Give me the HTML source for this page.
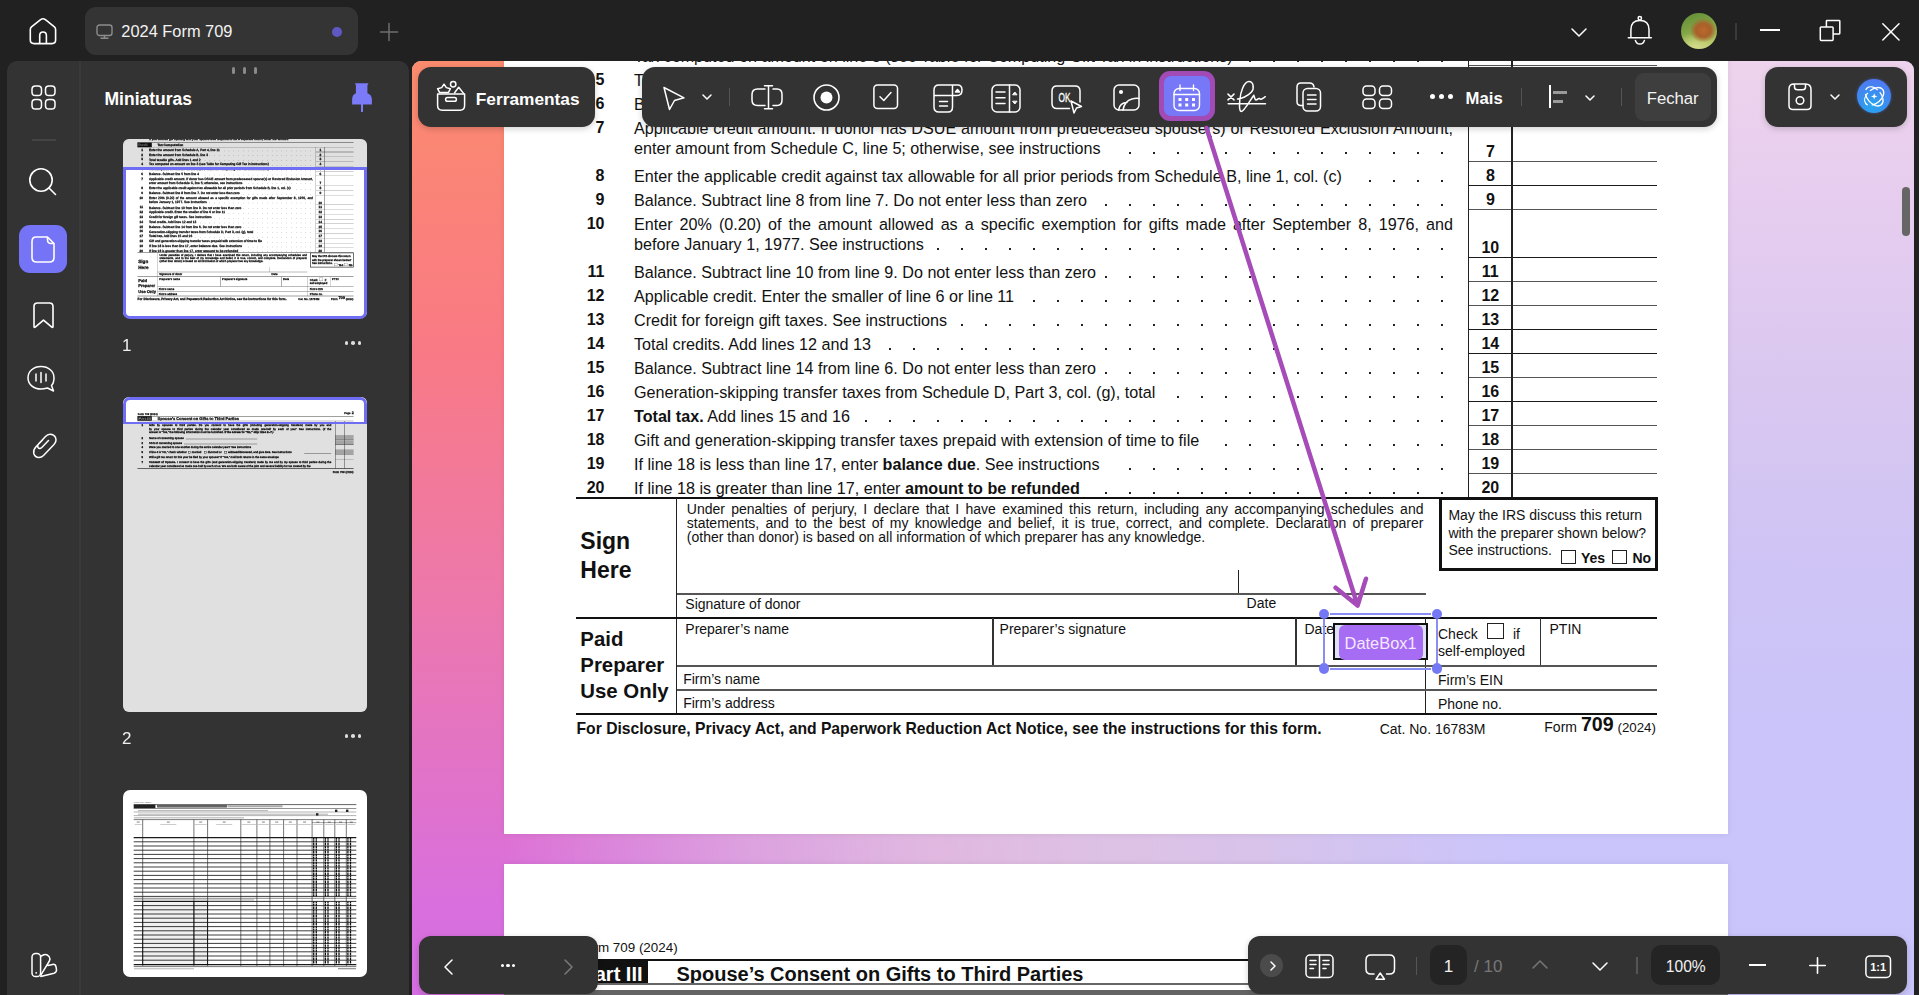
<!DOCTYPE html><html><head><meta charset="utf-8"><title>2024 Form 709</title><style>
html,body{margin:0;padding:0}
body{width:1919px;height:995px;overflow:hidden;position:relative;background:#212121;font-family:"Liberation Sans",sans-serif;color:#111}
.t{position:absolute;white-space:nowrap;line-height:1}
.r{position:absolute}
.ic{position:absolute;overflow:visible}
b{font-weight:bold}
.th .t{-webkit-text-stroke:1.3px #111}
</style></head><body><svg class="ic" style="left:20.0px;top:10.0px;width:46.0px;height:45.0px;stroke-width:1.6" viewBox="0 0 46 45" fill="none" stroke="#fff" stroke-width="1.6" stroke-linecap="round" stroke-linejoin="round"><path d="M10.3 19.5 Q10.3 17.8 11.8 16.6 L20.6 9.6 Q23 7.8 25.4 9.6 L34.1 16.6 Q35.6 17.8 35.6 19.5 V30 Q35.6 33.6 32 33.6 H14 Q10.3 33.6 10.3 30 Z M19.7 33.6 V25.5 Q19.7 22 23 22 Q26.4 22 26.4 25.5 V33.6"/></svg><div class="r" style="left:85.3px;top:7px;width:272.3px;height:47.6px;border-radius:11px;background:#343434"></div><svg class="ic" style="left:95.5px;top:24.0px;width:17.0px;height:15.5px;stroke:#8c8c8c;stroke-width:1.4" viewBox="0 0 17 15.5" fill="none" stroke="#fff" stroke-width="1.6" stroke-linecap="round" stroke-linejoin="round"><rect x="1" y="1" width="15" height="10.5" rx="2.5"/><path d="M8.5 11.5 V14 M5 14.2 H12"/></svg><div class="t" style="left:121.3px;top:23.3px;font-size:16.40px;color:#f2f2f2;">2024 Form 709</div><div class="r" style="left:332.3px;top:26.5px;width:10px;height:10px;border-radius:50%;background:#5f58c2"></div><svg class="ic" style="left:379.6px;top:23.0px;width:18.0px;height:18.0px;stroke:#6e6e6e;stroke-width:1.5" viewBox="0 0 18 18" fill="none" stroke="#fff" stroke-width="1.6" stroke-linecap="round" stroke-linejoin="round"><path d="M9 0.5 V17.5 M0.5 9 H17.5"/></svg><svg class="ic" style="left:1571.0px;top:27.5px;width:16.0px;height:9.0px;stroke-width:1.5" viewBox="0 0 16 9" fill="none" stroke="#fff" stroke-width="1.6" stroke-linecap="round" stroke-linejoin="round"><path d="M1 1 L8 8 L15 1"/></svg><svg class="ic" style="left:1620.0px;top:10.0px;width:40.0px;height:40.0px;stroke-width:1.5" viewBox="0 0 40 40" fill="none" stroke="#fff" stroke-width="1.6" stroke-linecap="round" stroke-linejoin="round"><path d="M10.9 27.7 V19.5 Q10.9 10.4 19.9 10.4 Q29 10.4 29 19.5 V27.7 M8.3 27.8 H31.3 M15.4 30.4 Q16.3 34.1 19.9 34.1 Q23.5 34.1 24.4 30.4"/><circle cx="19.8" cy="8.3" r="1.7"/></svg><div class="r" style="left:1680.8px;top:12.7px;width:36.5px;height:36.5px;border-radius:50%;background:radial-gradient(ellipse 38% 34% at 62% 48%, #b8692e 0%, #a9602a 55%, rgba(160,100,50,0) 100%),radial-gradient(ellipse 60% 40% at 40% 95%, #d4dc8a 0%, rgba(200,210,120,0) 100%),linear-gradient(160deg,#5f8a35 0%,#7ea345 40%,#a9bf5c 75%,#c6d27c 100%)"></div><div class="r" style="left:1735.2px;top:22.7px;width:1.5px;height:16.9px;background:#3a3a3a"></div><div class="r" style="left:1759.8px;top:29.4px;width:20.4px;height:1.3px;background:#fff"></div><svg class="ic" style="left:1819.0px;top:20.4px;width:22.0px;height:22.0px;stroke-width:1.5;stroke-linecap:butt" viewBox="0 0 22 22" fill="none" stroke="#fff" stroke-width="1.6" stroke-linecap="round" stroke-linejoin="round"><rect x="1.3" y="7" width="12.8" height="13.4" rx="0.8"/><path d="M7.4 7 V1.2 Q7.4 0.6 8 0.6 H20.2 Q20.8 0.6 20.8 1.2 V13.3 Q20.8 13.9 20.2 13.9 H14.1"/></svg><svg class="ic" style="left:1882.0px;top:23.0px;width:18.0px;height:18.0px;stroke-width:1.5" viewBox="0 0 18 18" fill="none" stroke="#fff" stroke-width="1.6" stroke-linecap="round" stroke-linejoin="round"><path d="M0.8 0.8 L17 17 M17 0.8 L0.8 17"/></svg><div class="r" style="left:7px;top:61px;width:401.5px;height:940px;border-radius:10px 10px 0 0;background:#333333"></div><div class="r" style="left:78.5px;top:61.0px;width:2.0px;height:934.0px;background:#3a3a3a"></div><svg class="ic" style="left:30.8px;top:84.6px;width:25.0px;height:25.0px;stroke-width:1.5" viewBox="0 0 25 25" fill="none" stroke="#fff" stroke-width="1.6" stroke-linecap="round" stroke-linejoin="round"><rect x="1" y="1" width="9.5" height="9.5" rx="3.3"/><rect x="14.5" y="1" width="9.5" height="9.5" rx="3.3"/><rect x="1" y="14.5" width="9.5" height="9.5" rx="3.3"/><rect x="14.5" y="14.5" width="9.5" height="9.5" rx="3.3"/></svg><div class="r" style="left:32.0px;top:139.2px;width:24.0px;height:1.5px;background:#444"></div><svg class="ic" style="left:29.0px;top:168.0px;width:28.0px;height:28.0px;stroke-width:1.6" viewBox="0 0 28 28" fill="none" stroke="#fff" stroke-width="1.6" stroke-linecap="round" stroke-linejoin="round"><circle cx="12" cy="12" r="11.2"/><path d="M20 20 L26.5 26.5"/></svg><div class="r" style="left:19px;top:225px;width:48px;height:47.5px;border-radius:11px;background:#7573f6"></div><svg class="ic" style="left:31.0px;top:235.8px;width:24.0px;height:27.0px;stroke-width:1.6" viewBox="0 0 24 27" fill="none" stroke="#fff" stroke-width="1.6" stroke-linecap="round" stroke-linejoin="round"><path d="M5 1 H16.5 L23 7.5 V21.5 Q23 26 18.5 26 H5.5 Q1 26 1 21.5 V5.5 Q1 1 5 1 Z M16.5 1 V3.5 Q16.5 7.5 20 7.5 H23"/></svg><svg class="ic" style="left:32.6px;top:301.8px;width:21.0px;height:27.0px;stroke-width:1.6" viewBox="0 0 21 27" fill="none" stroke="#fff" stroke-width="1.6" stroke-linecap="round" stroke-linejoin="round"><path d="M1 4.5 Q1 1 4.5 1 H16.5 Q20 1 20 4.5 V24.5 Q20 26 18.8 25.2 L10.5 18.2 L2.2 25.2 Q1 26 1 24.5 Z"/></svg><svg class="ic" style="left:27.0px;top:365.0px;width:28.0px;height:28.0px;stroke-width:1.5" viewBox="0 0 28 28" fill="none" stroke="#fff" stroke-width="1.6" stroke-linecap="round" stroke-linejoin="round"><path d="M14 1.5 C6.5 1.5 1 6.3 1 12.8 C1 19.3 6.5 24 14 24 C16.5 24 18.5 23.5 20.5 23 L26.5 26 L24.5 20.5 C26.5 18.5 27 15.5 27 12.8 C27 6.3 21.5 1.5 14 1.5 Z M9 9 V16 M14 7.5 V17.5 M19 9 V16"/></svg><svg class="ic" style="left:31.7px;top:433.0px;width:25.0px;height:26.0px;stroke-width:1.5" viewBox="0 0 25 26" fill="none" stroke="#fff" stroke-width="1.6" stroke-linecap="round" stroke-linejoin="round"><path d="M10.5 7 L4 13.8 Q1 17 1.8 20.5 Q3 24.5 7 24.5 Q9.5 24.5 11.5 22.5 L22 11.5 Q25 8 23.5 4.5 Q21.8 1 18 1.2 Q15.5 1.3 13.5 3.5 L6.5 11 Q5 12.8 6 14.5 Q7.5 16.5 9.8 14.5 L16.5 7.5"/></svg><svg class="ic" style="left:20.0px;top:940.0px;width:50.0px;height:50.0px;stroke-width:1.5" viewBox="0 0 50 50" fill="none" stroke="#fff" stroke-width="1.6" stroke-linecap="round" stroke-linejoin="round"><rect x="12" y="13.4" width="8.6" height="23.2" rx="3.6"/><path d="M20.8 16.2 L23.8 14.8 Q26.8 13.8 29 16.4 Q30.6 18.6 29.4 21 L20.8 35.2 M28 25.4 L32.6 24.4 Q35.6 24 36.1 27.2 L36.5 29.6 Q36.7 32.4 34 33.2 L20.8 36.4"/><circle cx="16.2" cy="32.8" r="0.9" fill="#fff" stroke="none"/></svg><div class="t" style="left:232.0px;top:65.3px;font-size:10.00px;"></div><div class="r" style="left:231.5px;top:66.8px;width:3.3px;height:7px;border-radius:2px;background:#8a8a8a"></div><div class="r" style="left:242.8px;top:66.8px;width:3.3px;height:7px;border-radius:2px;background:#8a8a8a"></div><div class="r" style="left:254.2px;top:66.8px;width:3.3px;height:7px;border-radius:2px;background:#8a8a8a"></div><div class="t" style="left:104.5px;top:90.5px;font-size:17.50px;font-weight:bold;color:#fff;">Miniaturas</div><svg class="ic" style="left:345px;top:78px;width:35px;height:38px" viewBox="0 0 35 38"><path d="M9.9 5.3 H23.5 L22.4 7.2 V15.2 Q26.9 16.8 26.9 21.5 V26.4 H7.1 V21.5 Q7.1 16.8 10.9 15.2 V7.2 Z M16 26 H18 V34 H16 Z" fill="#7b7af8"/></svg><div class="r th" style="left:122.8px;top:138.8px;width:244.0px;height:179.5px;overflow:hidden;background:#fff;border-radius:6px;"><div style="position:absolute;left:0;top:0;width:1224px;height:1584px;transform-origin:0 0;will-change:transform;text-rendering:geometricPrecision;transform:scale(0.2) translate(0px,-679px)"><div style="position:absolute;left:-504px;top:750px"><div class="t" style="left:634.0px;top:-79.5px;font-size:16.00px;">If you elected gift splitting and your spouse was required to file a separate return, enter the amount</div><div class="r" style="left:575.5px;top:-54.8px;width:1081.0px;height:1.5px;background:#111"></div><div class="r" style="left:575.5px;top:-53.5px;width:72px;height:23px;background:#111"></div><div class="t" style="left:581.5px;top:-49.5px;font-size:16.00px;font-weight:bold;color:#fff;">Part II</div><div class="t" style="left:676.0px;top:-49.5px;font-size:16.00px;font-weight:bold;">Tax Computation</div><div class="r" style="left:575.5px;top:-30.8px;width:1081.0px;height:1.2px;background:#333"></div><div class="t" style="left:595.6px;top:-23.9px;font-size:16.00px;font-weight:bold;">1</div><div class="t" style="left:634.0px;top:-24.1px;font-size:16.15px;">Enter the amount from Schedule A, Part 4, line 11</div><div class="r" style="left:1441.0px;top:-12.4px;width:2px;height:2px;background:#222"></div><div class="r" style="left:1417.0px;top:-12.4px;width:2px;height:2px;background:#222"></div><div class="r" style="left:1393.0px;top:-12.4px;width:2px;height:2px;background:#222"></div><div class="r" style="left:1369.0px;top:-12.4px;width:2px;height:2px;background:#222"></div><div class="r" style="left:1345.0px;top:-12.4px;width:2px;height:2px;background:#222"></div><div class="r" style="left:1321.0px;top:-12.4px;width:2px;height:2px;background:#222"></div><div class="r" style="left:1297.0px;top:-12.4px;width:2px;height:2px;background:#222"></div><div class="r" style="left:1273.0px;top:-12.4px;width:2px;height:2px;background:#222"></div><div class="r" style="left:1249.0px;top:-12.4px;width:2px;height:2px;background:#222"></div><div class="r" style="left:1225.0px;top:-12.4px;width:2px;height:2px;background:#222"></div><div class="r" style="left:1201.0px;top:-12.4px;width:2px;height:2px;background:#222"></div><div class="r" style="left:1177.0px;top:-12.4px;width:2px;height:2px;background:#222"></div><div class="r" style="left:1153.0px;top:-12.4px;width:2px;height:2px;background:#222"></div><div class="r" style="left:1129.0px;top:-12.4px;width:2px;height:2px;background:#222"></div><div class="r" style="left:1105.0px;top:-12.4px;width:2px;height:2px;background:#222"></div><div class="r" style="left:1081.0px;top:-12.4px;width:2px;height:2px;background:#222"></div><div class="r" style="left:1057.0px;top:-12.4px;width:2px;height:2px;background:#222"></div><div class="r" style="left:1033.0px;top:-12.4px;width:2px;height:2px;background:#222"></div><div class="r" style="left:1009.0px;top:-12.4px;width:2px;height:2px;background:#222"></div><div class="t" style="left:1485.9px;top:-23.9px;font-size:16.00px;font-weight:bold;">1</div><div class="r" style="left:1468.5px;top:-6.8px;width:188.0px;height:1.3px;background:#1a1a1a"></div><div class="t" style="left:595.6px;top:0.1px;font-size:16.00px;font-weight:bold;">2</div><div class="t" style="left:634.0px;top:-0.1px;font-size:16.15px;">Enter the amount from Schedule B, line 3</div><div class="r" style="left:1441.0px;top:11.6px;width:2px;height:2px;background:#222"></div><div class="r" style="left:1417.0px;top:11.6px;width:2px;height:2px;background:#222"></div><div class="r" style="left:1393.0px;top:11.6px;width:2px;height:2px;background:#222"></div><div class="r" style="left:1369.0px;top:11.6px;width:2px;height:2px;background:#222"></div><div class="r" style="left:1345.0px;top:11.6px;width:2px;height:2px;background:#222"></div><div class="r" style="left:1321.0px;top:11.6px;width:2px;height:2px;background:#222"></div><div class="r" style="left:1297.0px;top:11.6px;width:2px;height:2px;background:#222"></div><div class="r" style="left:1273.0px;top:11.6px;width:2px;height:2px;background:#222"></div><div class="r" style="left:1249.0px;top:11.6px;width:2px;height:2px;background:#222"></div><div class="r" style="left:1225.0px;top:11.6px;width:2px;height:2px;background:#222"></div><div class="r" style="left:1201.0px;top:11.6px;width:2px;height:2px;background:#222"></div><div class="r" style="left:1177.0px;top:11.6px;width:2px;height:2px;background:#222"></div><div class="r" style="left:1153.0px;top:11.6px;width:2px;height:2px;background:#222"></div><div class="r" style="left:1129.0px;top:11.6px;width:2px;height:2px;background:#222"></div><div class="r" style="left:1105.0px;top:11.6px;width:2px;height:2px;background:#222"></div><div class="r" style="left:1081.0px;top:11.6px;width:2px;height:2px;background:#222"></div><div class="r" style="left:1057.0px;top:11.6px;width:2px;height:2px;background:#222"></div><div class="r" style="left:1033.0px;top:11.6px;width:2px;height:2px;background:#222"></div><div class="r" style="left:1009.0px;top:11.6px;width:2px;height:2px;background:#222"></div><div class="r" style="left:985.0px;top:11.6px;width:2px;height:2px;background:#222"></div><div class="r" style="left:961.0px;top:11.6px;width:2px;height:2px;background:#222"></div><div class="r" style="left:937.0px;top:11.6px;width:2px;height:2px;background:#222"></div><div class="t" style="left:1485.9px;top:0.1px;font-size:16.00px;font-weight:bold;">2</div><div class="r" style="left:1468.5px;top:17.3px;width:188.0px;height:1.0px;background:#555"></div><div class="t" style="left:595.6px;top:24.1px;font-size:16.00px;font-weight:bold;">3</div><div class="t" style="left:634.0px;top:23.9px;font-size:16.15px;">Total taxable gifts. Add lines 1 and 2</div><div class="r" style="left:1441.0px;top:35.6px;width:2px;height:2px;background:#222"></div><div class="r" style="left:1417.0px;top:35.6px;width:2px;height:2px;background:#222"></div><div class="r" style="left:1393.0px;top:35.6px;width:2px;height:2px;background:#222"></div><div class="r" style="left:1369.0px;top:35.6px;width:2px;height:2px;background:#222"></div><div class="r" style="left:1345.0px;top:35.6px;width:2px;height:2px;background:#222"></div><div class="r" style="left:1321.0px;top:35.6px;width:2px;height:2px;background:#222"></div><div class="r" style="left:1297.0px;top:35.6px;width:2px;height:2px;background:#222"></div><div class="r" style="left:1273.0px;top:35.6px;width:2px;height:2px;background:#222"></div><div class="r" style="left:1249.0px;top:35.6px;width:2px;height:2px;background:#222"></div><div class="r" style="left:1225.0px;top:35.6px;width:2px;height:2px;background:#222"></div><div class="r" style="left:1201.0px;top:35.6px;width:2px;height:2px;background:#222"></div><div class="r" style="left:1177.0px;top:35.6px;width:2px;height:2px;background:#222"></div><div class="r" style="left:1153.0px;top:35.6px;width:2px;height:2px;background:#222"></div><div class="r" style="left:1129.0px;top:35.6px;width:2px;height:2px;background:#222"></div><div class="r" style="left:1105.0px;top:35.6px;width:2px;height:2px;background:#222"></div><div class="r" style="left:1081.0px;top:35.6px;width:2px;height:2px;background:#222"></div><div class="r" style="left:1057.0px;top:35.6px;width:2px;height:2px;background:#222"></div><div class="r" style="left:1033.0px;top:35.6px;width:2px;height:2px;background:#222"></div><div class="r" style="left:1009.0px;top:35.6px;width:2px;height:2px;background:#222"></div><div class="r" style="left:985.0px;top:35.6px;width:2px;height:2px;background:#222"></div><div class="r" style="left:961.0px;top:35.6px;width:2px;height:2px;background:#222"></div><div class="r" style="left:937.0px;top:35.6px;width:2px;height:2px;background:#222"></div><div class="r" style="left:913.0px;top:35.6px;width:2px;height:2px;background:#222"></div><div class="t" style="left:1485.9px;top:24.1px;font-size:16.00px;font-weight:bold;">3</div><div class="r" style="left:1468.5px;top:41.1px;width:188.0px;height:1.3px;background:#1a1a1a"></div><div class="t" style="left:595.6px;top:48.1px;font-size:16.00px;font-weight:bold;">4</div><div class="t" style="left:634.0px;top:47.9px;font-size:16.15px;">Tax computed on amount on line 3 (see Table for Computing Gift Tax in instructions)</div><div class="r" style="left:1441.0px;top:59.6px;width:2px;height:2px;background:#222"></div><div class="r" style="left:1417.0px;top:59.6px;width:2px;height:2px;background:#222"></div><div class="r" style="left:1393.0px;top:59.6px;width:2px;height:2px;background:#222"></div><div class="r" style="left:1369.0px;top:59.6px;width:2px;height:2px;background:#222"></div><div class="r" style="left:1345.0px;top:59.6px;width:2px;height:2px;background:#222"></div><div class="r" style="left:1321.0px;top:59.6px;width:2px;height:2px;background:#222"></div><div class="r" style="left:1297.0px;top:59.6px;width:2px;height:2px;background:#222"></div><div class="r" style="left:1273.0px;top:59.6px;width:2px;height:2px;background:#222"></div><div class="r" style="left:1249.0px;top:59.6px;width:2px;height:2px;background:#222"></div><div class="t" style="left:1485.9px;top:48.1px;font-size:16.00px;font-weight:bold;">4</div><div class="r" style="left:1468.5px;top:65.3px;width:188.0px;height:1.0px;background:#555"></div><div class="t" style="left:595.6px;top:72.1px;font-size:16.00px;font-weight:bold;">5</div><div class="t" style="left:634.0px;top:71.9px;font-size:16.15px;">Tax computed on amount on line 2 (see Table for Computing Gift Tax in instructions)</div><div class="r" style="left:1441.0px;top:83.6px;width:2px;height:2px;background:#222"></div><div class="r" style="left:1417.0px;top:83.6px;width:2px;height:2px;background:#222"></div><div class="r" style="left:1393.0px;top:83.6px;width:2px;height:2px;background:#222"></div><div class="r" style="left:1369.0px;top:83.6px;width:2px;height:2px;background:#222"></div><div class="r" style="left:1345.0px;top:83.6px;width:2px;height:2px;background:#222"></div><div class="r" style="left:1321.0px;top:83.6px;width:2px;height:2px;background:#222"></div><div class="r" style="left:1297.0px;top:83.6px;width:2px;height:2px;background:#222"></div><div class="r" style="left:1273.0px;top:83.6px;width:2px;height:2px;background:#222"></div><div class="r" style="left:1249.0px;top:83.6px;width:2px;height:2px;background:#222"></div><div class="t" style="left:1485.9px;top:72.1px;font-size:16.00px;font-weight:bold;">5</div><div class="r" style="left:1468.5px;top:89.1px;width:188.0px;height:1.3px;background:#1a1a1a"></div><div class="t" style="left:595.6px;top:96.1px;font-size:16.00px;font-weight:bold;">6</div><div class="t" style="left:634.0px;top:95.9px;font-size:16.15px;">Balance. Subtract line 5 from line 4</div><div class="r" style="left:1441.0px;top:107.6px;width:2px;height:2px;background:#222"></div><div class="r" style="left:1417.0px;top:107.6px;width:2px;height:2px;background:#222"></div><div class="r" style="left:1393.0px;top:107.6px;width:2px;height:2px;background:#222"></div><div class="r" style="left:1369.0px;top:107.6px;width:2px;height:2px;background:#222"></div><div class="r" style="left:1345.0px;top:107.6px;width:2px;height:2px;background:#222"></div><div class="r" style="left:1321.0px;top:107.6px;width:2px;height:2px;background:#222"></div><div class="r" style="left:1297.0px;top:107.6px;width:2px;height:2px;background:#222"></div><div class="r" style="left:1273.0px;top:107.6px;width:2px;height:2px;background:#222"></div><div class="r" style="left:1249.0px;top:107.6px;width:2px;height:2px;background:#222"></div><div class="r" style="left:1225.0px;top:107.6px;width:2px;height:2px;background:#222"></div><div class="r" style="left:1201.0px;top:107.6px;width:2px;height:2px;background:#222"></div><div class="r" style="left:1177.0px;top:107.6px;width:2px;height:2px;background:#222"></div><div class="r" style="left:1153.0px;top:107.6px;width:2px;height:2px;background:#222"></div><div class="r" style="left:1129.0px;top:107.6px;width:2px;height:2px;background:#222"></div><div class="r" style="left:1105.0px;top:107.6px;width:2px;height:2px;background:#222"></div><div class="r" style="left:1081.0px;top:107.6px;width:2px;height:2px;background:#222"></div><div class="r" style="left:1057.0px;top:107.6px;width:2px;height:2px;background:#222"></div><div class="r" style="left:1033.0px;top:107.6px;width:2px;height:2px;background:#222"></div><div class="r" style="left:1009.0px;top:107.6px;width:2px;height:2px;background:#222"></div><div class="r" style="left:985.0px;top:107.6px;width:2px;height:2px;background:#222"></div><div class="r" style="left:961.0px;top:107.6px;width:2px;height:2px;background:#222"></div><div class="r" style="left:937.0px;top:107.6px;width:2px;height:2px;background:#222"></div><div class="r" style="left:913.0px;top:107.6px;width:2px;height:2px;background:#222"></div><div class="t" style="left:1485.9px;top:96.1px;font-size:16.00px;font-weight:bold;">6</div><div class="r" style="left:1468.5px;top:113.3px;width:188.0px;height:1.0px;background:#555"></div><div class="t" style="left:595.6px;top:120.3px;font-size:16.00px;font-weight:bold;">7</div><div class="t" style="left:634.0px;top:120.1px;width:819.0px;font-size:16.15px;text-align:justify;text-align-last:justify;white-space:normal;">Applicable credit amount. If donor has DSUE amount from predeceased spouse(s) or Restored Exclusion Amount,</div><div class="t" style="left:634.0px;top:140.1px;font-size:16.15px;">enter amount from Schedule C, line 5; otherwise, see instructions</div><div class="r" style="left:1441.0px;top:151.8px;width:2px;height:2px;background:#222"></div><div class="r" style="left:1417.0px;top:151.8px;width:2px;height:2px;background:#222"></div><div class="r" style="left:1393.0px;top:151.8px;width:2px;height:2px;background:#222"></div><div class="r" style="left:1369.0px;top:151.8px;width:2px;height:2px;background:#222"></div><div class="r" style="left:1345.0px;top:151.8px;width:2px;height:2px;background:#222"></div><div class="r" style="left:1321.0px;top:151.8px;width:2px;height:2px;background:#222"></div><div class="r" style="left:1297.0px;top:151.8px;width:2px;height:2px;background:#222"></div><div class="r" style="left:1273.0px;top:151.8px;width:2px;height:2px;background:#222"></div><div class="r" style="left:1249.0px;top:151.8px;width:2px;height:2px;background:#222"></div><div class="r" style="left:1225.0px;top:151.8px;width:2px;height:2px;background:#222"></div><div class="r" style="left:1201.0px;top:151.8px;width:2px;height:2px;background:#222"></div><div class="r" style="left:1177.0px;top:151.8px;width:2px;height:2px;background:#222"></div><div class="r" style="left:1153.0px;top:151.8px;width:2px;height:2px;background:#222"></div><div class="r" style="left:1129.0px;top:151.8px;width:2px;height:2px;background:#222"></div><div class="t" style="left:1485.9px;top:144.1px;font-size:16.00px;font-weight:bold;">7</div><div class="r" style="left:1468.5px;top:161.3px;width:188.0px;height:1.0px;background:#555"></div><div class="t" style="left:595.6px;top:168.1px;font-size:16.00px;font-weight:bold;">8</div><div class="t" style="left:634.0px;top:167.9px;font-size:16.15px;">Enter the applicable credit against tax allowable for all prior periods from Schedule B, line 1, col. (c)</div><div class="r" style="left:1441.0px;top:179.6px;width:2px;height:2px;background:#222"></div><div class="r" style="left:1417.0px;top:179.6px;width:2px;height:2px;background:#222"></div><div class="r" style="left:1393.0px;top:179.6px;width:2px;height:2px;background:#222"></div><div class="r" style="left:1369.0px;top:179.6px;width:2px;height:2px;background:#222"></div><div class="t" style="left:1485.9px;top:168.1px;font-size:16.00px;font-weight:bold;">8</div><div class="r" style="left:1468.5px;top:185.2px;width:188.0px;height:1.3px;background:#1a1a1a"></div><div class="t" style="left:595.6px;top:192.1px;font-size:16.00px;font-weight:bold;">9</div><div class="t" style="left:634.0px;top:191.9px;font-size:16.15px;">Balance. Subtract line 8 from line 7. Do not enter less than zero</div><div class="r" style="left:1441.0px;top:203.6px;width:2px;height:2px;background:#222"></div><div class="r" style="left:1417.0px;top:203.6px;width:2px;height:2px;background:#222"></div><div class="r" style="left:1393.0px;top:203.6px;width:2px;height:2px;background:#222"></div><div class="r" style="left:1369.0px;top:203.6px;width:2px;height:2px;background:#222"></div><div class="r" style="left:1345.0px;top:203.6px;width:2px;height:2px;background:#222"></div><div class="r" style="left:1321.0px;top:203.6px;width:2px;height:2px;background:#222"></div><div class="r" style="left:1297.0px;top:203.6px;width:2px;height:2px;background:#222"></div><div class="r" style="left:1273.0px;top:203.6px;width:2px;height:2px;background:#222"></div><div class="r" style="left:1249.0px;top:203.6px;width:2px;height:2px;background:#222"></div><div class="r" style="left:1225.0px;top:203.6px;width:2px;height:2px;background:#222"></div><div class="r" style="left:1201.0px;top:203.6px;width:2px;height:2px;background:#222"></div><div class="r" style="left:1177.0px;top:203.6px;width:2px;height:2px;background:#222"></div><div class="r" style="left:1153.0px;top:203.6px;width:2px;height:2px;background:#222"></div><div class="r" style="left:1129.0px;top:203.6px;width:2px;height:2px;background:#222"></div><div class="r" style="left:1105.0px;top:203.6px;width:2px;height:2px;background:#222"></div><div class="t" style="left:1485.9px;top:192.1px;font-size:16.00px;font-weight:bold;">9</div><div class="r" style="left:1468.5px;top:209.3px;width:188.0px;height:1.0px;background:#555"></div><div class="t" style="left:586.7px;top:216.3px;font-size:16.00px;font-weight:bold;">10</div><div class="t" style="left:634.0px;top:216.1px;width:819.0px;font-size:16.15px;text-align:justify;text-align-last:justify;white-space:normal;">Enter 20% (0.20) of the amount allowed as a specific exemption for gifts made after September 8, 1976, and</div><div class="t" style="left:634.0px;top:236.1px;font-size:16.15px;">before January 1, 1977. See instructions</div><div class="r" style="left:1441.0px;top:247.8px;width:2px;height:2px;background:#222"></div><div class="r" style="left:1417.0px;top:247.8px;width:2px;height:2px;background:#222"></div><div class="r" style="left:1393.0px;top:247.8px;width:2px;height:2px;background:#222"></div><div class="r" style="left:1369.0px;top:247.8px;width:2px;height:2px;background:#222"></div><div class="r" style="left:1345.0px;top:247.8px;width:2px;height:2px;background:#222"></div><div class="r" style="left:1321.0px;top:247.8px;width:2px;height:2px;background:#222"></div><div class="r" style="left:1297.0px;top:247.8px;width:2px;height:2px;background:#222"></div><div class="r" style="left:1273.0px;top:247.8px;width:2px;height:2px;background:#222"></div><div class="r" style="left:1249.0px;top:247.8px;width:2px;height:2px;background:#222"></div><div class="r" style="left:1225.0px;top:247.8px;width:2px;height:2px;background:#222"></div><div class="r" style="left:1201.0px;top:247.8px;width:2px;height:2px;background:#222"></div><div class="r" style="left:1177.0px;top:247.8px;width:2px;height:2px;background:#222"></div><div class="r" style="left:1153.0px;top:247.8px;width:2px;height:2px;background:#222"></div><div class="r" style="left:1129.0px;top:247.8px;width:2px;height:2px;background:#222"></div><div class="r" style="left:1105.0px;top:247.8px;width:2px;height:2px;background:#222"></div><div class="r" style="left:1081.0px;top:247.8px;width:2px;height:2px;background:#222"></div><div class="r" style="left:1057.0px;top:247.8px;width:2px;height:2px;background:#222"></div><div class="r" style="left:1033.0px;top:247.8px;width:2px;height:2px;background:#222"></div><div class="r" style="left:1009.0px;top:247.8px;width:2px;height:2px;background:#222"></div><div class="r" style="left:985.0px;top:247.8px;width:2px;height:2px;background:#222"></div><div class="r" style="left:961.0px;top:247.8px;width:2px;height:2px;background:#222"></div><div class="r" style="left:937.0px;top:247.8px;width:2px;height:2px;background:#222"></div><div class="t" style="left:1481.4px;top:240.1px;font-size:16.00px;font-weight:bold;">10</div><div class="r" style="left:1468.5px;top:257.2px;width:188.0px;height:1.3px;background:#1a1a1a"></div><div class="t" style="left:587.6px;top:264.1px;font-size:16.00px;font-weight:bold;">11</div><div class="t" style="left:634.0px;top:263.9px;font-size:16.15px;">Balance. Subtract line 10 from line 9. Do not enter less than zero</div><div class="r" style="left:1441.0px;top:275.6px;width:2px;height:2px;background:#222"></div><div class="r" style="left:1417.0px;top:275.6px;width:2px;height:2px;background:#222"></div><div class="r" style="left:1393.0px;top:275.6px;width:2px;height:2px;background:#222"></div><div class="r" style="left:1369.0px;top:275.6px;width:2px;height:2px;background:#222"></div><div class="r" style="left:1345.0px;top:275.6px;width:2px;height:2px;background:#222"></div><div class="r" style="left:1321.0px;top:275.6px;width:2px;height:2px;background:#222"></div><div class="r" style="left:1297.0px;top:275.6px;width:2px;height:2px;background:#222"></div><div class="r" style="left:1273.0px;top:275.6px;width:2px;height:2px;background:#222"></div><div class="r" style="left:1249.0px;top:275.6px;width:2px;height:2px;background:#222"></div><div class="r" style="left:1225.0px;top:275.6px;width:2px;height:2px;background:#222"></div><div class="r" style="left:1201.0px;top:275.6px;width:2px;height:2px;background:#222"></div><div class="r" style="left:1177.0px;top:275.6px;width:2px;height:2px;background:#222"></div><div class="r" style="left:1153.0px;top:275.6px;width:2px;height:2px;background:#222"></div><div class="r" style="left:1129.0px;top:275.6px;width:2px;height:2px;background:#222"></div><div class="r" style="left:1105.0px;top:275.6px;width:2px;height:2px;background:#222"></div><div class="t" style="left:1481.8px;top:264.1px;font-size:16.00px;font-weight:bold;">11</div><div class="r" style="left:1468.5px;top:281.3px;width:188.0px;height:1.0px;background:#555"></div><div class="t" style="left:586.7px;top:288.1px;font-size:16.00px;font-weight:bold;">12</div><div class="t" style="left:634.0px;top:287.9px;font-size:16.15px;">Applicable credit. Enter the smaller of line 6 or line 11</div><div class="r" style="left:1441.0px;top:299.6px;width:2px;height:2px;background:#222"></div><div class="r" style="left:1417.0px;top:299.6px;width:2px;height:2px;background:#222"></div><div class="r" style="left:1393.0px;top:299.6px;width:2px;height:2px;background:#222"></div><div class="r" style="left:1369.0px;top:299.6px;width:2px;height:2px;background:#222"></div><div class="r" style="left:1345.0px;top:299.6px;width:2px;height:2px;background:#222"></div><div class="r" style="left:1321.0px;top:299.6px;width:2px;height:2px;background:#222"></div><div class="r" style="left:1297.0px;top:299.6px;width:2px;height:2px;background:#222"></div><div class="r" style="left:1273.0px;top:299.6px;width:2px;height:2px;background:#222"></div><div class="r" style="left:1249.0px;top:299.6px;width:2px;height:2px;background:#222"></div><div class="r" style="left:1225.0px;top:299.6px;width:2px;height:2px;background:#222"></div><div class="r" style="left:1201.0px;top:299.6px;width:2px;height:2px;background:#222"></div><div class="r" style="left:1177.0px;top:299.6px;width:2px;height:2px;background:#222"></div><div class="r" style="left:1153.0px;top:299.6px;width:2px;height:2px;background:#222"></div><div class="r" style="left:1129.0px;top:299.6px;width:2px;height:2px;background:#222"></div><div class="r" style="left:1105.0px;top:299.6px;width:2px;height:2px;background:#222"></div><div class="r" style="left:1081.0px;top:299.6px;width:2px;height:2px;background:#222"></div><div class="r" style="left:1057.0px;top:299.6px;width:2px;height:2px;background:#222"></div><div class="r" style="left:1033.0px;top:299.6px;width:2px;height:2px;background:#222"></div><div class="t" style="left:1481.4px;top:288.1px;font-size:16.00px;font-weight:bold;">12</div><div class="r" style="left:1468.5px;top:305.3px;width:188.0px;height:1.0px;background:#555"></div><div class="t" style="left:586.7px;top:312.1px;font-size:16.00px;font-weight:bold;">13</div><div class="t" style="left:634.0px;top:311.9px;font-size:16.15px;">Credit for foreign gift taxes. See instructions</div><div class="r" style="left:1441.0px;top:323.6px;width:2px;height:2px;background:#222"></div><div class="r" style="left:1417.0px;top:323.6px;width:2px;height:2px;background:#222"></div><div class="r" style="left:1393.0px;top:323.6px;width:2px;height:2px;background:#222"></div><div class="r" style="left:1369.0px;top:323.6px;width:2px;height:2px;background:#222"></div><div class="r" style="left:1345.0px;top:323.6px;width:2px;height:2px;background:#222"></div><div class="r" style="left:1321.0px;top:323.6px;width:2px;height:2px;background:#222"></div><div class="r" style="left:1297.0px;top:323.6px;width:2px;height:2px;background:#222"></div><div class="r" style="left:1273.0px;top:323.6px;width:2px;height:2px;background:#222"></div><div class="r" style="left:1249.0px;top:323.6px;width:2px;height:2px;background:#222"></div><div class="r" style="left:1225.0px;top:323.6px;width:2px;height:2px;background:#222"></div><div class="r" style="left:1201.0px;top:323.6px;width:2px;height:2px;background:#222"></div><div class="r" style="left:1177.0px;top:323.6px;width:2px;height:2px;background:#222"></div><div class="r" style="left:1153.0px;top:323.6px;width:2px;height:2px;background:#222"></div><div class="r" style="left:1129.0px;top:323.6px;width:2px;height:2px;background:#222"></div><div class="r" style="left:1105.0px;top:323.6px;width:2px;height:2px;background:#222"></div><div class="r" style="left:1081.0px;top:323.6px;width:2px;height:2px;background:#222"></div><div class="r" style="left:1057.0px;top:323.6px;width:2px;height:2px;background:#222"></div><div class="r" style="left:1033.0px;top:323.6px;width:2px;height:2px;background:#222"></div><div class="r" style="left:1009.0px;top:323.6px;width:2px;height:2px;background:#222"></div><div class="r" style="left:985.0px;top:323.6px;width:2px;height:2px;background:#222"></div><div class="r" style="left:961.0px;top:323.6px;width:2px;height:2px;background:#222"></div><div class="t" style="left:1481.4px;top:312.1px;font-size:16.00px;font-weight:bold;">13</div><div class="r" style="left:1468.5px;top:329.2px;width:188.0px;height:1.3px;background:#1a1a1a"></div><div class="t" style="left:586.7px;top:336.1px;font-size:16.00px;font-weight:bold;">14</div><div class="t" style="left:634.0px;top:335.9px;font-size:16.15px;">Total credits. Add lines 12 and 13</div><div class="r" style="left:1441.0px;top:347.6px;width:2px;height:2px;background:#222"></div><div class="r" style="left:1417.0px;top:347.6px;width:2px;height:2px;background:#222"></div><div class="r" style="left:1393.0px;top:347.6px;width:2px;height:2px;background:#222"></div><div class="r" style="left:1369.0px;top:347.6px;width:2px;height:2px;background:#222"></div><div class="r" style="left:1345.0px;top:347.6px;width:2px;height:2px;background:#222"></div><div class="r" style="left:1321.0px;top:347.6px;width:2px;height:2px;background:#222"></div><div class="r" style="left:1297.0px;top:347.6px;width:2px;height:2px;background:#222"></div><div class="r" style="left:1273.0px;top:347.6px;width:2px;height:2px;background:#222"></div><div class="r" style="left:1249.0px;top:347.6px;width:2px;height:2px;background:#222"></div><div class="r" style="left:1225.0px;top:347.6px;width:2px;height:2px;background:#222"></div><div class="r" style="left:1201.0px;top:347.6px;width:2px;height:2px;background:#222"></div><div class="r" style="left:1177.0px;top:347.6px;width:2px;height:2px;background:#222"></div><div class="r" style="left:1153.0px;top:347.6px;width:2px;height:2px;background:#222"></div><div class="r" style="left:1129.0px;top:347.6px;width:2px;height:2px;background:#222"></div><div class="r" style="left:1105.0px;top:347.6px;width:2px;height:2px;background:#222"></div><div class="r" style="left:1081.0px;top:347.6px;width:2px;height:2px;background:#222"></div><div class="r" style="left:1057.0px;top:347.6px;width:2px;height:2px;background:#222"></div><div class="r" style="left:1033.0px;top:347.6px;width:2px;height:2px;background:#222"></div><div class="r" style="left:1009.0px;top:347.6px;width:2px;height:2px;background:#222"></div><div class="r" style="left:985.0px;top:347.6px;width:2px;height:2px;background:#222"></div><div class="r" style="left:961.0px;top:347.6px;width:2px;height:2px;background:#222"></div><div class="r" style="left:937.0px;top:347.6px;width:2px;height:2px;background:#222"></div><div class="r" style="left:913.0px;top:347.6px;width:2px;height:2px;background:#222"></div><div class="r" style="left:889.0px;top:347.6px;width:2px;height:2px;background:#222"></div><div class="t" style="left:1481.4px;top:336.1px;font-size:16.00px;font-weight:bold;">14</div><div class="r" style="left:1468.5px;top:353.2px;width:188.0px;height:1.3px;background:#1a1a1a"></div><div class="t" style="left:586.7px;top:360.1px;font-size:16.00px;font-weight:bold;">15</div><div class="t" style="left:634.0px;top:359.9px;font-size:16.15px;">Balance. Subtract line 14 from line 6. Do not enter less than zero</div><div class="r" style="left:1441.0px;top:371.6px;width:2px;height:2px;background:#222"></div><div class="r" style="left:1417.0px;top:371.6px;width:2px;height:2px;background:#222"></div><div class="r" style="left:1393.0px;top:371.6px;width:2px;height:2px;background:#222"></div><div class="r" style="left:1369.0px;top:371.6px;width:2px;height:2px;background:#222"></div><div class="r" style="left:1345.0px;top:371.6px;width:2px;height:2px;background:#222"></div><div class="r" style="left:1321.0px;top:371.6px;width:2px;height:2px;background:#222"></div><div class="r" style="left:1297.0px;top:371.6px;width:2px;height:2px;background:#222"></div><div class="r" style="left:1273.0px;top:371.6px;width:2px;height:2px;background:#222"></div><div class="r" style="left:1249.0px;top:371.6px;width:2px;height:2px;background:#222"></div><div class="r" style="left:1225.0px;top:371.6px;width:2px;height:2px;background:#222"></div><div class="r" style="left:1201.0px;top:371.6px;width:2px;height:2px;background:#222"></div><div class="r" style="left:1177.0px;top:371.6px;width:2px;height:2px;background:#222"></div><div class="r" style="left:1153.0px;top:371.6px;width:2px;height:2px;background:#222"></div><div class="r" style="left:1129.0px;top:371.6px;width:2px;height:2px;background:#222"></div><div class="r" style="left:1105.0px;top:371.6px;width:2px;height:2px;background:#222"></div><div class="t" style="left:1481.4px;top:360.1px;font-size:16.00px;font-weight:bold;">15</div><div class="r" style="left:1468.5px;top:377.3px;width:188.0px;height:1.0px;background:#555"></div><div class="t" style="left:586.7px;top:384.1px;font-size:16.00px;font-weight:bold;">16</div><div class="t" style="left:634.0px;top:383.9px;font-size:16.15px;">Generation-skipping transfer taxes from Schedule D, Part 3, col. (g), total</div><div class="r" style="left:1441.0px;top:395.6px;width:2px;height:2px;background:#222"></div><div class="r" style="left:1417.0px;top:395.6px;width:2px;height:2px;background:#222"></div><div class="r" style="left:1393.0px;top:395.6px;width:2px;height:2px;background:#222"></div><div class="r" style="left:1369.0px;top:395.6px;width:2px;height:2px;background:#222"></div><div class="r" style="left:1345.0px;top:395.6px;width:2px;height:2px;background:#222"></div><div class="r" style="left:1321.0px;top:395.6px;width:2px;height:2px;background:#222"></div><div class="r" style="left:1297.0px;top:395.6px;width:2px;height:2px;background:#222"></div><div class="r" style="left:1273.0px;top:395.6px;width:2px;height:2px;background:#222"></div><div class="r" style="left:1249.0px;top:395.6px;width:2px;height:2px;background:#222"></div><div class="r" style="left:1225.0px;top:395.6px;width:2px;height:2px;background:#222"></div><div class="r" style="left:1201.0px;top:395.6px;width:2px;height:2px;background:#222"></div><div class="r" style="left:1177.0px;top:395.6px;width:2px;height:2px;background:#222"></div><div class="t" style="left:1481.4px;top:384.1px;font-size:16.00px;font-weight:bold;">16</div><div class="r" style="left:1468.5px;top:401.2px;width:188.0px;height:1.3px;background:#1a1a1a"></div><div class="t" style="left:586.7px;top:408.1px;font-size:16.00px;font-weight:bold;">17</div><div class="t" style="left:634.0px;top:407.9px;font-size:16.15px;"><b>Total tax.</b> Add lines 15 and 16</div><div class="r" style="left:1441.0px;top:419.6px;width:2px;height:2px;background:#222"></div><div class="r" style="left:1417.0px;top:419.6px;width:2px;height:2px;background:#222"></div><div class="r" style="left:1393.0px;top:419.6px;width:2px;height:2px;background:#222"></div><div class="r" style="left:1369.0px;top:419.6px;width:2px;height:2px;background:#222"></div><div class="r" style="left:1345.0px;top:419.6px;width:2px;height:2px;background:#222"></div><div class="r" style="left:1321.0px;top:419.6px;width:2px;height:2px;background:#222"></div><div class="r" style="left:1297.0px;top:419.6px;width:2px;height:2px;background:#222"></div><div class="r" style="left:1273.0px;top:419.6px;width:2px;height:2px;background:#222"></div><div class="r" style="left:1249.0px;top:419.6px;width:2px;height:2px;background:#222"></div><div class="r" style="left:1225.0px;top:419.6px;width:2px;height:2px;background:#222"></div><div class="r" style="left:1201.0px;top:419.6px;width:2px;height:2px;background:#222"></div><div class="r" style="left:1177.0px;top:419.6px;width:2px;height:2px;background:#222"></div><div class="r" style="left:1153.0px;top:419.6px;width:2px;height:2px;background:#222"></div><div class="r" style="left:1129.0px;top:419.6px;width:2px;height:2px;background:#222"></div><div class="r" style="left:1105.0px;top:419.6px;width:2px;height:2px;background:#222"></div><div class="r" style="left:1081.0px;top:419.6px;width:2px;height:2px;background:#222"></div><div class="r" style="left:1057.0px;top:419.6px;width:2px;height:2px;background:#222"></div><div class="r" style="left:1033.0px;top:419.6px;width:2px;height:2px;background:#222"></div><div class="r" style="left:1009.0px;top:419.6px;width:2px;height:2px;background:#222"></div><div class="r" style="left:985.0px;top:419.6px;width:2px;height:2px;background:#222"></div><div class="r" style="left:961.0px;top:419.6px;width:2px;height:2px;background:#222"></div><div class="r" style="left:937.0px;top:419.6px;width:2px;height:2px;background:#222"></div><div class="r" style="left:913.0px;top:419.6px;width:2px;height:2px;background:#222"></div><div class="r" style="left:889.0px;top:419.6px;width:2px;height:2px;background:#222"></div><div class="r" style="left:865.0px;top:419.6px;width:2px;height:2px;background:#222"></div><div class="t" style="left:1481.4px;top:408.1px;font-size:16.00px;font-weight:bold;">17</div><div class="r" style="left:1468.5px;top:425.3px;width:188.0px;height:1.0px;background:#555"></div><div class="t" style="left:586.7px;top:432.1px;font-size:16.00px;font-weight:bold;">18</div><div class="t" style="left:634.0px;top:431.9px;font-size:16.15px;">Gift and generation-skipping transfer taxes prepaid with extension of time to file</div><div class="r" style="left:1441.0px;top:443.6px;width:2px;height:2px;background:#222"></div><div class="r" style="left:1417.0px;top:443.6px;width:2px;height:2px;background:#222"></div><div class="r" style="left:1393.0px;top:443.6px;width:2px;height:2px;background:#222"></div><div class="r" style="left:1369.0px;top:443.6px;width:2px;height:2px;background:#222"></div><div class="r" style="left:1345.0px;top:443.6px;width:2px;height:2px;background:#222"></div><div class="r" style="left:1321.0px;top:443.6px;width:2px;height:2px;background:#222"></div><div class="r" style="left:1297.0px;top:443.6px;width:2px;height:2px;background:#222"></div><div class="r" style="left:1273.0px;top:443.6px;width:2px;height:2px;background:#222"></div><div class="r" style="left:1249.0px;top:443.6px;width:2px;height:2px;background:#222"></div><div class="r" style="left:1225.0px;top:443.6px;width:2px;height:2px;background:#222"></div><div class="t" style="left:1481.4px;top:432.1px;font-size:16.00px;font-weight:bold;">18</div><div class="r" style="left:1468.5px;top:449.3px;width:188.0px;height:1.0px;background:#555"></div><div class="t" style="left:586.7px;top:456.1px;font-size:16.00px;font-weight:bold;">19</div><div class="t" style="left:634.0px;top:455.9px;font-size:16.15px;">If line 18 is less than line 17, enter <b>balance due</b>. See instructions</div><div class="r" style="left:1441.0px;top:467.6px;width:2px;height:2px;background:#222"></div><div class="r" style="left:1417.0px;top:467.6px;width:2px;height:2px;background:#222"></div><div class="r" style="left:1393.0px;top:467.6px;width:2px;height:2px;background:#222"></div><div class="r" style="left:1369.0px;top:467.6px;width:2px;height:2px;background:#222"></div><div class="r" style="left:1345.0px;top:467.6px;width:2px;height:2px;background:#222"></div><div class="r" style="left:1321.0px;top:467.6px;width:2px;height:2px;background:#222"></div><div class="r" style="left:1297.0px;top:467.6px;width:2px;height:2px;background:#222"></div><div class="r" style="left:1273.0px;top:467.6px;width:2px;height:2px;background:#222"></div><div class="r" style="left:1249.0px;top:467.6px;width:2px;height:2px;background:#222"></div><div class="r" style="left:1225.0px;top:467.6px;width:2px;height:2px;background:#222"></div><div class="r" style="left:1201.0px;top:467.6px;width:2px;height:2px;background:#222"></div><div class="r" style="left:1177.0px;top:467.6px;width:2px;height:2px;background:#222"></div><div class="r" style="left:1153.0px;top:467.6px;width:2px;height:2px;background:#222"></div><div class="r" style="left:1129.0px;top:467.6px;width:2px;height:2px;background:#222"></div><div class="t" style="left:1481.4px;top:456.1px;font-size:16.00px;font-weight:bold;">19</div><div class="r" style="left:1468.5px;top:473.3px;width:188.0px;height:1.0px;background:#555"></div><div class="t" style="left:586.7px;top:480.1px;font-size:16.00px;font-weight:bold;">20</div><div class="t" style="left:634.0px;top:479.9px;font-size:16.15px;">If line 18 is greater than line 17, enter <b>amount to be refunded</b></div><div class="r" style="left:1441.0px;top:491.6px;width:2px;height:2px;background:#222"></div><div class="r" style="left:1417.0px;top:491.6px;width:2px;height:2px;background:#222"></div><div class="r" style="left:1393.0px;top:491.6px;width:2px;height:2px;background:#222"></div><div class="r" style="left:1369.0px;top:491.6px;width:2px;height:2px;background:#222"></div><div class="r" style="left:1345.0px;top:491.6px;width:2px;height:2px;background:#222"></div><div class="r" style="left:1321.0px;top:491.6px;width:2px;height:2px;background:#222"></div><div class="r" style="left:1297.0px;top:491.6px;width:2px;height:2px;background:#222"></div><div class="r" style="left:1273.0px;top:491.6px;width:2px;height:2px;background:#222"></div><div class="r" style="left:1249.0px;top:491.6px;width:2px;height:2px;background:#222"></div><div class="r" style="left:1225.0px;top:491.6px;width:2px;height:2px;background:#222"></div><div class="r" style="left:1201.0px;top:491.6px;width:2px;height:2px;background:#222"></div><div class="r" style="left:1177.0px;top:491.6px;width:2px;height:2px;background:#222"></div><div class="r" style="left:1153.0px;top:491.6px;width:2px;height:2px;background:#222"></div><div class="r" style="left:1129.0px;top:491.6px;width:2px;height:2px;background:#222"></div><div class="r" style="left:1105.0px;top:491.6px;width:2px;height:2px;background:#222"></div><div class="t" style="left:1481.4px;top:480.1px;font-size:16.00px;font-weight:bold;">20</div><div class="r" style="left:1467.8px;top:-30.2px;width:1.3px;height:528.2px;background:#222"></div><div class="r" style="left:1511.3px;top:-30.2px;width:1.3px;height:528.2px;background:#222"></div><div class="r" style="left:575.5px;top:497.1px;width:1081.0px;height:1.8px;background:#111"></div><div class="r" style="left:675.9px;top:498.0px;width:1.3px;height:216.0px;background:#222"></div><div class="t" style="left:580.3px;top:530.1px;font-size:23.00px;font-weight:bold;">Sign</div><div class="t" style="left:580.3px;top:559.2px;font-size:23.00px;font-weight:bold;">Here</div><div class="t" style="left:686.8px;top:502.4px;width:736.7px;font-size:14.00px;text-align:justify;text-align-last:justify;white-space:normal;">Under penalties of perjury, I declare that I have examined this return, including any accompanying schedules and</div><div class="t" style="left:686.8px;top:516.4px;width:736.7px;font-size:14.00px;text-align:justify;text-align-last:justify;white-space:normal;">statements, and to the best of my knowledge and belief, it is true, correct, and complete. Declaration of preparer</div><div class="t" style="left:686.8px;top:530.4px;font-size:14.00px;">(other than donor) is based on all information of which preparer has any knowledge.</div><div class="r" style="left:1237.6px;top:569.7px;width:1.3px;height:24.3px;background:#222"></div><div class="r" style="left:677.0px;top:593.4px;width:749.0px;height:1.3px;background:#555"></div><div class="t" style="left:685.3px;top:596.8px;font-size:14.00px;">Signature of donor</div><div class="t" style="left:1246.6px;top:596.2px;font-size:14.00px;">Date</div><div class="r" style="left:1438.5px;top:496.5px;width:219.0px;height:74.5px;border:3px solid #111;background:#fff;box-sizing:border-box;"></div><div class="t" style="left:1448.4px;top:507.9px;font-size:14.00px;">May the IRS discuss this return</div><div class="t" style="left:1448.4px;top:525.7px;font-size:14.00px;">with the preparer shown below?</div><div class="t" style="left:1448.4px;top:543.2px;font-size:14.00px;">See instructions.</div><div class="r" style="left:1560.8px;top:549.6px;width:15.0px;height:14.5px;border:1.3px solid #222;background:transparent;box-sizing:border-box;"></div><div class="t" style="left:1580.9px;top:551.1px;font-size:14.00px;font-weight:bold;">Yes</div><div class="r" style="left:1612.3px;top:549.6px;width:15.0px;height:14.5px;border:1.3px solid #222;background:transparent;box-sizing:border-box;"></div><div class="t" style="left:1632.4px;top:551.1px;font-size:14.00px;font-weight:bold;">No</div><div class="r" style="left:575.5px;top:617.1px;width:1081.0px;height:1.8px;background:#111"></div><div class="t" style="left:580.3px;top:629.0px;font-size:20.40px;font-weight:bold;">Paid</div><div class="t" style="left:580.3px;top:655.4px;font-size:20.40px;font-weight:bold;">Preparer</div><div class="t" style="left:580.3px;top:681.2px;font-size:20.40px;font-weight:bold;">Use Only</div><div class="r" style="left:992.4px;top:618.0px;width:1.3px;height:48.0px;background:#333"></div><div class="r" style="left:1295.3px;top:618.0px;width:1.3px;height:48.0px;background:#333"></div><div class="r" style="left:1424.8px;top:618.0px;width:1.3px;height:96.0px;background:#222"></div><div class="r" style="left:1539.8px;top:618.0px;width:1.3px;height:48.0px;background:#333"></div><div class="t" style="left:685.3px;top:621.6px;font-size:14.00px;">Preparer’s name</div><div class="t" style="left:999.6px;top:621.6px;font-size:14.00px;">Preparer’s signature</div><div class="t" style="left:1304.5px;top:621.6px;font-size:14.00px;">Date</div><div class="t" style="left:1438.0px;top:626.9px;font-size:14.00px;">Check</div><div class="r" style="left:1486.8px;top:623.3px;width:17.0px;height:16.2px;border:1.3px solid #222;background:transparent;box-sizing:border-box;"></div><div class="t" style="left:1513.0px;top:626.9px;font-size:14.00px;">if</div><div class="t" style="left:1438.0px;top:643.9px;font-size:14.00px;">self-employed</div><div class="t" style="left:1549.5px;top:622.1px;font-size:14.00px;">PTIN</div><div class="r" style="left:677.0px;top:665.4px;width:979.5px;height:1.3px;background:#555"></div><div class="t" style="left:683.2px;top:672.2px;font-size:14.00px;">Firm’s name</div><div class="t" style="left:1438.0px;top:672.6px;font-size:14.00px;">Firm’s EIN</div><div class="r" style="left:677.0px;top:689.4px;width:979.5px;height:1.3px;background:#555"></div><div class="t" style="left:683.2px;top:695.9px;font-size:14.00px;">Firm’s address</div><div class="t" style="left:1438.0px;top:696.9px;font-size:14.00px;">Phone no.</div><div class="r" style="left:575.5px;top:713.1px;width:1081.0px;height:1.8px;background:#111"></div><div class="t" style="left:576.5px;top:720.9px;font-size:15.70px;font-weight:bold;">For Disclosure, Privacy Act, and Paperwork Reduction Act Notice, see the instructions for this form.</div><div class="t" style="left:1379.7px;top:722.2px;font-size:14.00px;">Cat. No. 16783M</div><div class="t" style="left:1544.3px;top:720.2px;font-size:14.00px;">Form</div><div class="t" style="left:1580.9px;top:715.1px;font-size:19.60px;font-weight:bold;">709</div><div class="t" style="left:1617.5px;top:720.8px;font-size:13.30px;">(2024)</div></div></div></div><div class="r" style="left:122.8px;top:138.8px;width:244px;height:28.5px;background:rgba(0,0,0,0.12);border-radius:6px 6px 0 0"></div><div class="r" style="left:122.8px;top:166.5px;width:244px;height:152px;border:3px solid #6f6df3;border-radius:0 0 7px 7px;box-sizing:border-box"></div><div class="t" style="left:122.0px;top:336.6px;font-size:17.00px;color:#f0f0f0;">1</div><div class="r" style="left:344.8px;top:341.3px;width:3.5px;height:3.5px;border-radius:50%;background:#ddd"></div><div class="r" style="left:351.3px;top:341.3px;width:3.5px;height:3.5px;border-radius:50%;background:#ddd"></div><div class="r" style="left:357.8px;top:341.3px;width:3.5px;height:3.5px;border-radius:50%;background:#ddd"></div><div class="r th" style="left:122.9px;top:397.0px;width:244.0px;height:315.0px;overflow:hidden;background:#fff;border-radius:6px;"><div style="position:absolute;left:0;top:0;width:1224px;height:1584px;transform-origin:0 0;will-change:transform;text-rendering:geometricPrecision;transform:scale(0.2) translate(0px,0px)"><div style="position:absolute;left:-504px;top:-863.8px"><div class="t" style="left:577.9px;top:940.5px;font-size:13.40px;">Form 709 (2024)</div><div class="t" style="left:1610.1px;top:939.2px;font-size:13.40px;">Page </div><div class="t" style="left:1647.5px;top:935.8px;font-size:18.00px;font-weight:bold;">2</div><div class="r" style="left:575.5px;top:958.9px;width:1081.0px;height:2.2px;background:#111"></div><div class="r" style="left:575.5px;top:960px;width:72.5px;height:23.2px;background:#111"></div><div class="t" style="left:581.4px;top:963.6px;font-size:20.00px;font-weight:bold;color:#fff;">Part III</div><div class="t" style="left:676.4px;top:963.6px;font-size:20.00px;font-weight:bold;">Spouse’s Consent on Gifts to Third Parties</div><div class="r" style="left:575.5px;top:983.2px;width:1081.0px;height:1.5px;background:#666"></div><div class="t" style="left:596.7px;top:995.9px;font-size:14.00px;font-weight:bold;">1</div><div class="t" style="left:634.0px;top:995.9px;width:911.0px;font-size:14.00px;text-align:justify;text-align-last:justify;white-space:normal;">Gifts by spouses to third parties. Do you consent to have the gifts (including generation-skipping transfers) made by you and</div><div class="t" style="left:634.0px;top:1014.9px;width:911.0px;font-size:14.00px;text-align:justify;text-align-last:justify;white-space:normal;">by your spouse to third parties during the calendar year considered as made one-half by each of you? See instructions. (If the</div><div class="t" style="left:634.0px;top:1033.9px;font-size:14.00px;">answer is “Yes,” the following information must be furnished. <b>If the answer is “No,” skip lines 2–7.</b>)</div><div class="r" style="left:1565.0px;top:1053.4px;width:91.5px;height:1.2px;background:#333"></div><div class="t" style="left:596.7px;top:1059.9px;font-size:14.00px;font-weight:bold;">2</div><div class="t" style="left:634.0px;top:1059.9px;font-size:14.00px;">Name of consenting spouse</div><div class="r" style="left:817.6px;top:1073.2px;width:357.4px;height:1.5px;background:#333"></div><div class="r" style="left:1565px;top:1055px;width:91.5px;height:23.5px;background:#bbb"></div><div class="r" style="left:1565.0px;top:1077.9px;width:91.5px;height:1.2px;background:#333"></div><div class="t" style="left:596.7px;top:1084.4px;font-size:14.00px;font-weight:bold;">3</div><div class="t" style="left:634.0px;top:1084.4px;font-size:14.00px;">SSN of consenting spouse</div><div class="r" style="left:809.0px;top:1097.8px;width:366.0px;height:1.5px;background:#333"></div><div class="r" style="left:1565px;top:1079.5px;width:91.5px;height:23.5px;background:#bbb"></div><div class="r" style="left:1565.0px;top:1102.0px;width:91.5px;height:2.0px;background:#333"></div><div class="t" style="left:596.7px;top:1108.9px;font-size:14.00px;font-weight:bold;">4</div><div class="t" style="left:634.0px;top:1108.9px;font-size:14.00px;">Were you married to one another during the entire calendar year? See instructions</div><div class="r" style="left:1565.0px;top:1126.9px;width:91.5px;height:1.2px;background:#333"></div><div class="t" style="left:596.7px;top:1133.4px;font-size:14.00px;font-weight:bold;">5</div><div class="t" style="left:634.0px;top:1133.4px;font-size:14.00px;">If line 4 is “No,” check whether</div><div class="r" style="left:830.3px;top:1134.5px;width:13.0px;height:13.0px;border:2.5px solid #111;background:transparent;box-sizing:border-box;"></div><div class="t" style="left:848.3px;top:1133.4px;font-size:14.00px;">married</div><div class="r" style="left:909.8px;top:1134.5px;width:13.0px;height:13.0px;border:2.5px solid #111;background:transparent;box-sizing:border-box;"></div><div class="t" style="left:927.8px;top:1133.4px;font-size:14.00px;">divorced or</div><div class="r" style="left:1011.0px;top:1134.5px;width:13.0px;height:13.0px;border:2.5px solid #111;background:transparent;box-sizing:border-box;"></div><div class="t" style="left:1029.0px;top:1133.4px;font-size:14.00px;">widowed/deceased, and give date. See instructions</div><div class="r" style="left:1410.0px;top:1146.8px;width:135.0px;height:1.5px;background:#333"></div><div class="r" style="left:1565px;top:1128.5px;width:91.5px;height:23.5px;background:#bbb"></div><div class="r" style="left:1565.0px;top:1151.4px;width:91.5px;height:1.2px;background:#333"></div><div class="t" style="left:596.7px;top:1157.9px;font-size:14.00px;font-weight:bold;">6</div><div class="t" style="left:634.0px;top:1157.9px;font-size:14.00px;">Will a gift tax return for this year be filed by your spouse? If “Yes,” mail both returns in the same envelope</div><div class="r" style="left:1565.0px;top:1175.9px;width:91.5px;height:1.2px;background:#333"></div><div class="t" style="left:596.7px;top:1182.4px;font-size:14.00px;font-weight:bold;">7</div><div class="t" style="left:634.0px;top:1182.4px;width:911.0px;font-size:14.00px;text-align:justify;text-align-last:justify;white-space:normal;"><b>Consent of Spouse.</b> I consent to have the gifts (and generation-skipping transfers) made by me and by my spouse to third parties during the</div><div class="t" style="left:634.0px;top:1201.4px;font-size:14.00px;">calendar year considered as made one-half by each of us. We are both aware of the joint and several liability for tax created by the</div><div class="r" style="left:1564.0px;top:984.0px;width:2.0px;height:237.5px;background:#222"></div><div class="r" style="left:1609.8px;top:984.0px;width:2.5px;height:237.5px;background:#222"></div><div class="r" style="left:575.5px;top:1221.0px;width:1081.0px;height:3.0px;background:#111"></div><div class="t" style="left:1552.2px;top:1229.4px;font-size:14.00px;">Form 709 (2024)</div></div></div></div><div class="r" style="left:122.9px;top:423.3px;width:244px;height:288.7px;background:rgba(0,0,0,0.12);border-radius:0 0 6px 6px"></div><div class="r" style="left:122.9px;top:397px;width:244px;height:26.8px;border:3px solid #6f6df3;border-bottom-width:2.5px;border-radius:7px 7px 0 0;box-sizing:border-box"></div><div class="t" style="left:122.0px;top:729.6px;font-size:17.00px;color:#f0f0f0;">2</div><div class="r" style="left:344.8px;top:734.3px;width:3.5px;height:3.5px;border-radius:50%;background:#ddd"></div><div class="r" style="left:351.3px;top:734.3px;width:3.5px;height:3.5px;border-radius:50%;background:#ddd"></div><div class="r" style="left:357.8px;top:734.3px;width:3.5px;height:3.5px;border-radius:50%;background:#ddd"></div><div class="r" style="left:122.8px;top:790px;width:244px;height:187px;border-radius:7px;overflow:hidden"><svg class="ic" style="left:0;top:0;width:244px;height:187px" viewBox="0 0 244 187"><rect x="0" y="0" width="244" height="187" fill="#fff"/><text x="10.7" y="13" font-size="2.4" fill="#555" font-family="Liberation Sans">Form 709 (2024)</text><rect x="10.7" y="14.6" width="21.7" height="3.6" fill="#222"/><rect x="34" y="15" width="70" height="2.6" fill="#666"/><rect x="104.5" y="15.3" width="55" height="2" fill="#aaa"/><g stroke="#222" fill="none"><line x1="10.7" y1="14.6" x2="233.3" y2="14.6" stroke-width="0.7"/><line x1="10.7" y1="18.5" x2="233.3" y2="18.5" stroke-width="0.5"/><line x1="10.7" y1="22" x2="233.3" y2="22" stroke-width="0.35"/><line x1="10.7" y1="25.6" x2="233.3" y2="25.6" stroke-width="0.35"/><line x1="10.7" y1="29.6" x2="233.3" y2="29.6" stroke-width="0.6"/></g><rect x="15" y="20" width="130" height="1.2" fill="#bbb"/><rect x="15" y="23.6" width="190" height="1.2" fill="#bbb"/><rect x="11" y="27.2" width="110" height="1.2" fill="#bbb"/><rect x="212" y="19.6" width="2.4" height="2.4" fill="#222"/><rect x="223" y="19.6" width="2.4" height="2.4" fill="#222"/><rect x="193" y="23.2" width="2.4" height="2.4" fill="#222"/><rect x="13.7" y="31.5" width="3" height="1.2" fill="#999"/><rect x="11.7" y="34" width="7.0" height="1" fill="#ccc"/><rect x="43.8" y="31.5" width="3" height="1.2" fill="#999"/><rect x="37.3" y="34" width="16.0" height="1" fill="#ccc"/><rect x="76.2" y="31.5" width="3" height="1.2" fill="#999"/><rect x="71.9" y="34" width="11.7" height="1" fill="#ccc"/><rect x="99.7" y="31.5" width="3" height="1.2" fill="#999"/><rect x="93.2" y="34" width="16.0" height="1" fill="#ccc"/><rect x="124.3" y="31.5" width="3" height="1.2" fill="#999"/><rect x="118.8" y="34" width="14.1" height="1" fill="#ccc"/><rect x="138.9" y="31.5" width="3" height="1.2" fill="#999"/><rect x="134.9" y="34" width="11.0" height="1" fill="#ccc"/><rect x="152.2" y="31.5" width="3" height="1.2" fill="#999"/><rect x="147.9" y="34" width="11.7" height="1" fill="#ccc"/><rect x="165.8" y="31.5" width="3" height="1.2" fill="#999"/><rect x="161.6" y="34" width="11.4" height="1" fill="#ccc"/><rect x="180.1" y="31.5" width="3" height="1.2" fill="#999"/><rect x="175.0" y="34" width="13.1" height="1" fill="#ccc"/><rect x="193.4" y="31.5" width="3" height="1.2" fill="#999"/><rect x="190.1" y="34" width="9.7" height="1" fill="#ccc"/><rect x="204.8" y="31.5" width="3" height="1.2" fill="#999"/><rect x="201.8" y="34" width="9.0" height="1" fill="#ccc"/><rect x="216.1" y="31.5" width="3" height="1.2" fill="#999"/><rect x="212.8" y="34" width="9.5" height="1" fill="#ccc"/><rect x="226.8" y="31.5" width="3" height="1.2" fill="#999"/><rect x="224.3" y="34" width="8.0" height="1" fill="#ccc"/><g stroke="#1a1a1a" fill="none"><line x1="10.7" y1="47.6" x2="233.3" y2="47.6" stroke-width="1.1"/><line x1="10.7" y1="51.8" x2="233.3" y2="51.8" stroke-width="0.85"/><line x1="10.7" y1="56.0" x2="233.3" y2="56.0" stroke-width="0.85"/><line x1="10.7" y1="60.2" x2="233.3" y2="60.2" stroke-width="0.85"/><line x1="10.7" y1="64.4" x2="233.3" y2="64.4" stroke-width="0.85"/><line x1="10.7" y1="68.6" x2="233.3" y2="68.6" stroke-width="0.85"/><line x1="10.7" y1="72.8" x2="233.3" y2="72.8" stroke-width="0.85"/><line x1="10.7" y1="77.0" x2="233.3" y2="77.0" stroke-width="0.85"/><line x1="10.7" y1="81.2" x2="233.3" y2="81.2" stroke-width="0.85"/><line x1="10.7" y1="85.4" x2="233.3" y2="85.4" stroke-width="0.85"/><line x1="10.7" y1="89.6" x2="233.3" y2="89.6" stroke-width="0.85"/><line x1="10.7" y1="93.8" x2="233.3" y2="93.8" stroke-width="0.85"/><line x1="10.7" y1="98.0" x2="233.3" y2="98.0" stroke-width="0.85"/><line x1="10.7" y1="102.2" x2="233.3" y2="102.2" stroke-width="0.85"/><line x1="10.7" y1="106.4" x2="233.3" y2="106.4" stroke-width="0.85"/><line x1="10.7" y1="108.3" x2="233.3" y2="108.3" stroke-width="0.5"/><rect x="11" y="109.3" width="120" height="1.1" fill="#bbb" stroke="none"/><line x1="10.7" y1="111.4" x2="233.3" y2="111.4" stroke-width="0.9"/><line x1="10.7" y1="115.6" x2="233.3" y2="115.6" stroke-width="0.85"/><line x1="10.7" y1="119.8" x2="233.3" y2="119.8" stroke-width="0.85"/><line x1="10.7" y1="124.0" x2="233.3" y2="124.0" stroke-width="0.85"/><line x1="10.7" y1="128.2" x2="233.3" y2="128.2" stroke-width="0.85"/><line x1="10.7" y1="132.4" x2="233.3" y2="132.4" stroke-width="0.85"/><line x1="10.7" y1="136.6" x2="233.3" y2="136.6" stroke-width="0.85"/><line x1="10.7" y1="140.8" x2="233.3" y2="140.8" stroke-width="0.85"/><line x1="10.7" y1="145.0" x2="233.3" y2="145.0" stroke-width="0.85"/><line x1="10.7" y1="149.2" x2="233.3" y2="149.2" stroke-width="0.85"/><line x1="10.7" y1="153.4" x2="233.3" y2="153.4" stroke-width="0.85"/><line x1="10.7" y1="157.6" x2="233.3" y2="157.6" stroke-width="0.85"/><line x1="10.7" y1="161.8" x2="233.3" y2="161.8" stroke-width="0.85"/><line x1="10.7" y1="166.0" x2="233.3" y2="166.0" stroke-width="0.85"/><line x1="10.7" y1="170.2" x2="233.3" y2="170.2" stroke-width="0.85"/><line x1="10.7" y1="174.6" x2="233.3" y2="174.6" stroke-width="1.1"/><line x1="10.7" y1="176.6" x2="233.3" y2="176.6" stroke-width="0.6"/><line x1="19.7" y1="29.6" x2="19.7" y2="176" stroke-width="0.6"/><line x1="70.9" y1="29.6" x2="70.9" y2="176" stroke-width="0.6"/><line x1="84.6" y1="29.6" x2="84.6" y2="176" stroke-width="0.6"/><line x1="117.8" y1="29.6" x2="117.8" y2="176" stroke-width="0.6"/><line x1="133.9" y1="29.6" x2="133.9" y2="176" stroke-width="0.6"/><line x1="146.9" y1="29.6" x2="146.9" y2="176" stroke-width="0.6"/><line x1="160.6" y1="29.6" x2="160.6" y2="176" stroke-width="0.6"/><line x1="174" y1="29.6" x2="174" y2="176" stroke-width="0.6"/><line x1="189.1" y1="29.6" x2="189.1" y2="176" stroke-width="0.6"/><line x1="200.8" y1="29.6" x2="200.8" y2="176" stroke-width="0.6"/><line x1="211.8" y1="29.6" x2="211.8" y2="176" stroke-width="0.6"/><line x1="223.3" y1="29.6" x2="223.3" y2="176" stroke-width="0.6"/><line x1="189.1" y1="32.6" x2="233.3" y2="32.6" stroke-width="0.4"/></g><g stroke="#111" fill="none" stroke-width="1.3"><line x1="190.7" y1="47.6" x2="190.7" y2="107" stroke-dasharray="2.2 0.5"/><line x1="190.7" y1="111.4" x2="190.7" y2="175" stroke-dasharray="2.2 0.5"/><line x1="193.3" y1="47.6" x2="193.3" y2="107" stroke-dasharray="2.2 0.5"/><line x1="193.3" y1="111.4" x2="193.3" y2="175" stroke-dasharray="2.2 0.5"/><line x1="202.4" y1="47.6" x2="202.4" y2="107" stroke-dasharray="2.2 0.5"/><line x1="202.4" y1="111.4" x2="202.4" y2="175" stroke-dasharray="2.2 0.5"/><line x1="205.0" y1="47.6" x2="205.0" y2="107" stroke-dasharray="2.2 0.5"/><line x1="205.0" y1="111.4" x2="205.0" y2="175" stroke-dasharray="2.2 0.5"/><line x1="213.4" y1="47.6" x2="213.4" y2="107" stroke-dasharray="2.2 0.5"/><line x1="213.4" y1="111.4" x2="213.4" y2="175" stroke-dasharray="2.2 0.5"/><line x1="216.0" y1="47.6" x2="216.0" y2="107" stroke-dasharray="2.2 0.5"/><line x1="216.0" y1="111.4" x2="216.0" y2="175" stroke-dasharray="2.2 0.5"/><line x1="224.9" y1="47.6" x2="224.9" y2="107" stroke-dasharray="2.2 0.5"/><line x1="224.9" y1="111.4" x2="224.9" y2="175" stroke-dasharray="2.2 0.5"/><line x1="227.5" y1="47.6" x2="227.5" y2="107" stroke-dasharray="2.2 0.5"/><line x1="227.5" y1="111.4" x2="227.5" y2="175" stroke-dasharray="2.2 0.5"/><rect x="19.7" y="111.4" width="64.9" height="63.2" stroke-width="0.9"/><line x1="70.9" y1="111.4" x2="70.9" y2="174.6" stroke-width="0.9"/></g><rect x="19.7" y="111.4" width="64.9" height="63.2" fill="rgba(0,0,0,0.06)"/><rect x="11" y="178.2" width="60" height="1.1" fill="#bbb"/><rect x="215" y="178" width="18" height="1.3" fill="#999"/></svg></div><div class="r" style="left:412px;top:61px;width:1502px;height:934px;border-radius:9px 9px 0 0;overflow:hidden"><div class="r" style="left:0;top:0;width:1502px;height:934px;background:linear-gradient(to bottom,#eed3ec 0%,#e6cdef 15%,#d9c7f0 35%,#cfc4f4 52%,#cac4fa 72%,#c9c5fb 100%)"></div><div class="r" style="left:0;top:0;width:1502px;height:934px;background:radial-gradient(ellipse 38% 55% at 36% 88%,rgba(226,200,226,1) 0%,rgba(226,200,226,.7) 45%,rgba(226,200,226,0) 100%)"></div><div class="r" style="left:0;top:0;width:1502px;height:934px;background:linear-gradient(to bottom,#fb8b6d 0%,#f97a84 30%,#ec78ac 58%,#d96fdd 90%,#d56ee2 100%);-webkit-mask-image:linear-gradient(to right,#000 0%,#000 6.2%,rgba(0,0,0,.78) 12.5%,rgba(0,0,0,.45) 22%,rgba(0,0,0,.2) 33%,rgba(0,0,0,.07) 46%,transparent 70%)"></div><div class="r" style="left:92px;top:-811px;width:1224px;height:1584px;background:#fff;box-shadow:0 0 6px rgba(0,0,0,0.08);overflow:hidden"><div class="r" style="left:-504px;top:750px"><div class="t" style="left:634.0px;top:-79.5px;font-size:16.00px;">If you elected gift splitting and your spouse was required to file a separate return, enter the amount</div><div class="r" style="left:575.5px;top:-54.8px;width:1081.0px;height:1.5px;background:#111"></div><div class="r" style="left:575.5px;top:-53.5px;width:72px;height:23px;background:#111"></div><div class="t" style="left:581.5px;top:-49.5px;font-size:16.00px;font-weight:bold;color:#fff;">Part II</div><div class="t" style="left:676.0px;top:-49.5px;font-size:16.00px;font-weight:bold;">Tax Computation</div><div class="r" style="left:575.5px;top:-30.8px;width:1081.0px;height:1.2px;background:#333"></div><div class="t" style="left:595.6px;top:-23.9px;font-size:16.00px;font-weight:bold;">1</div><div class="t" style="left:634.0px;top:-24.1px;font-size:16.15px;">Enter the amount from Schedule A, Part 4, line 11</div><div class="r" style="left:1441.0px;top:-12.4px;width:2px;height:2px;background:#222"></div><div class="r" style="left:1417.0px;top:-12.4px;width:2px;height:2px;background:#222"></div><div class="r" style="left:1393.0px;top:-12.4px;width:2px;height:2px;background:#222"></div><div class="r" style="left:1369.0px;top:-12.4px;width:2px;height:2px;background:#222"></div><div class="r" style="left:1345.0px;top:-12.4px;width:2px;height:2px;background:#222"></div><div class="r" style="left:1321.0px;top:-12.4px;width:2px;height:2px;background:#222"></div><div class="r" style="left:1297.0px;top:-12.4px;width:2px;height:2px;background:#222"></div><div class="r" style="left:1273.0px;top:-12.4px;width:2px;height:2px;background:#222"></div><div class="r" style="left:1249.0px;top:-12.4px;width:2px;height:2px;background:#222"></div><div class="r" style="left:1225.0px;top:-12.4px;width:2px;height:2px;background:#222"></div><div class="r" style="left:1201.0px;top:-12.4px;width:2px;height:2px;background:#222"></div><div class="r" style="left:1177.0px;top:-12.4px;width:2px;height:2px;background:#222"></div><div class="r" style="left:1153.0px;top:-12.4px;width:2px;height:2px;background:#222"></div><div class="r" style="left:1129.0px;top:-12.4px;width:2px;height:2px;background:#222"></div><div class="r" style="left:1105.0px;top:-12.4px;width:2px;height:2px;background:#222"></div><div class="r" style="left:1081.0px;top:-12.4px;width:2px;height:2px;background:#222"></div><div class="r" style="left:1057.0px;top:-12.4px;width:2px;height:2px;background:#222"></div><div class="r" style="left:1033.0px;top:-12.4px;width:2px;height:2px;background:#222"></div><div class="r" style="left:1009.0px;top:-12.4px;width:2px;height:2px;background:#222"></div><div class="t" style="left:1485.9px;top:-23.9px;font-size:16.00px;font-weight:bold;">1</div><div class="r" style="left:1468.5px;top:-6.8px;width:188.0px;height:1.3px;background:#1a1a1a"></div><div class="t" style="left:595.6px;top:0.1px;font-size:16.00px;font-weight:bold;">2</div><div class="t" style="left:634.0px;top:-0.1px;font-size:16.15px;">Enter the amount from Schedule B, line 3</div><div class="r" style="left:1441.0px;top:11.6px;width:2px;height:2px;background:#222"></div><div class="r" style="left:1417.0px;top:11.6px;width:2px;height:2px;background:#222"></div><div class="r" style="left:1393.0px;top:11.6px;width:2px;height:2px;background:#222"></div><div class="r" style="left:1369.0px;top:11.6px;width:2px;height:2px;background:#222"></div><div class="r" style="left:1345.0px;top:11.6px;width:2px;height:2px;background:#222"></div><div class="r" style="left:1321.0px;top:11.6px;width:2px;height:2px;background:#222"></div><div class="r" style="left:1297.0px;top:11.6px;width:2px;height:2px;background:#222"></div><div class="r" style="left:1273.0px;top:11.6px;width:2px;height:2px;background:#222"></div><div class="r" style="left:1249.0px;top:11.6px;width:2px;height:2px;background:#222"></div><div class="r" style="left:1225.0px;top:11.6px;width:2px;height:2px;background:#222"></div><div class="r" style="left:1201.0px;top:11.6px;width:2px;height:2px;background:#222"></div><div class="r" style="left:1177.0px;top:11.6px;width:2px;height:2px;background:#222"></div><div class="r" style="left:1153.0px;top:11.6px;width:2px;height:2px;background:#222"></div><div class="r" style="left:1129.0px;top:11.6px;width:2px;height:2px;background:#222"></div><div class="r" style="left:1105.0px;top:11.6px;width:2px;height:2px;background:#222"></div><div class="r" style="left:1081.0px;top:11.6px;width:2px;height:2px;background:#222"></div><div class="r" style="left:1057.0px;top:11.6px;width:2px;height:2px;background:#222"></div><div class="r" style="left:1033.0px;top:11.6px;width:2px;height:2px;background:#222"></div><div class="r" style="left:1009.0px;top:11.6px;width:2px;height:2px;background:#222"></div><div class="r" style="left:985.0px;top:11.6px;width:2px;height:2px;background:#222"></div><div class="r" style="left:961.0px;top:11.6px;width:2px;height:2px;background:#222"></div><div class="r" style="left:937.0px;top:11.6px;width:2px;height:2px;background:#222"></div><div class="t" style="left:1485.9px;top:0.1px;font-size:16.00px;font-weight:bold;">2</div><div class="r" style="left:1468.5px;top:17.3px;width:188.0px;height:1.0px;background:#555"></div><div class="t" style="left:595.6px;top:24.1px;font-size:16.00px;font-weight:bold;">3</div><div class="t" style="left:634.0px;top:23.9px;font-size:16.15px;">Total taxable gifts. Add lines 1 and 2</div><div class="r" style="left:1441.0px;top:35.6px;width:2px;height:2px;background:#222"></div><div class="r" style="left:1417.0px;top:35.6px;width:2px;height:2px;background:#222"></div><div class="r" style="left:1393.0px;top:35.6px;width:2px;height:2px;background:#222"></div><div class="r" style="left:1369.0px;top:35.6px;width:2px;height:2px;background:#222"></div><div class="r" style="left:1345.0px;top:35.6px;width:2px;height:2px;background:#222"></div><div class="r" style="left:1321.0px;top:35.6px;width:2px;height:2px;background:#222"></div><div class="r" style="left:1297.0px;top:35.6px;width:2px;height:2px;background:#222"></div><div class="r" style="left:1273.0px;top:35.6px;width:2px;height:2px;background:#222"></div><div class="r" style="left:1249.0px;top:35.6px;width:2px;height:2px;background:#222"></div><div class="r" style="left:1225.0px;top:35.6px;width:2px;height:2px;background:#222"></div><div class="r" style="left:1201.0px;top:35.6px;width:2px;height:2px;background:#222"></div><div class="r" style="left:1177.0px;top:35.6px;width:2px;height:2px;background:#222"></div><div class="r" style="left:1153.0px;top:35.6px;width:2px;height:2px;background:#222"></div><div class="r" style="left:1129.0px;top:35.6px;width:2px;height:2px;background:#222"></div><div class="r" style="left:1105.0px;top:35.6px;width:2px;height:2px;background:#222"></div><div class="r" style="left:1081.0px;top:35.6px;width:2px;height:2px;background:#222"></div><div class="r" style="left:1057.0px;top:35.6px;width:2px;height:2px;background:#222"></div><div class="r" style="left:1033.0px;top:35.6px;width:2px;height:2px;background:#222"></div><div class="r" style="left:1009.0px;top:35.6px;width:2px;height:2px;background:#222"></div><div class="r" style="left:985.0px;top:35.6px;width:2px;height:2px;background:#222"></div><div class="r" style="left:961.0px;top:35.6px;width:2px;height:2px;background:#222"></div><div class="r" style="left:937.0px;top:35.6px;width:2px;height:2px;background:#222"></div><div class="r" style="left:913.0px;top:35.6px;width:2px;height:2px;background:#222"></div><div class="t" style="left:1485.9px;top:24.1px;font-size:16.00px;font-weight:bold;">3</div><div class="r" style="left:1468.5px;top:41.1px;width:188.0px;height:1.3px;background:#1a1a1a"></div><div class="t" style="left:595.6px;top:48.1px;font-size:16.00px;font-weight:bold;">4</div><div class="t" style="left:634.0px;top:47.9px;font-size:16.15px;">Tax computed on amount on line 3 (see Table for Computing Gift Tax in instructions)</div><div class="r" style="left:1441.0px;top:59.6px;width:2px;height:2px;background:#222"></div><div class="r" style="left:1417.0px;top:59.6px;width:2px;height:2px;background:#222"></div><div class="r" style="left:1393.0px;top:59.6px;width:2px;height:2px;background:#222"></div><div class="r" style="left:1369.0px;top:59.6px;width:2px;height:2px;background:#222"></div><div class="r" style="left:1345.0px;top:59.6px;width:2px;height:2px;background:#222"></div><div class="r" style="left:1321.0px;top:59.6px;width:2px;height:2px;background:#222"></div><div class="r" style="left:1297.0px;top:59.6px;width:2px;height:2px;background:#222"></div><div class="r" style="left:1273.0px;top:59.6px;width:2px;height:2px;background:#222"></div><div class="r" style="left:1249.0px;top:59.6px;width:2px;height:2px;background:#222"></div><div class="t" style="left:1485.9px;top:48.1px;font-size:16.00px;font-weight:bold;">4</div><div class="r" style="left:1468.5px;top:65.3px;width:188.0px;height:1.0px;background:#555"></div><div class="t" style="left:595.6px;top:72.1px;font-size:16.00px;font-weight:bold;">5</div><div class="t" style="left:634.0px;top:71.9px;font-size:16.15px;">Tax computed on amount on line 2 (see Table for Computing Gift Tax in instructions)</div><div class="r" style="left:1441.0px;top:83.6px;width:2px;height:2px;background:#222"></div><div class="r" style="left:1417.0px;top:83.6px;width:2px;height:2px;background:#222"></div><div class="r" style="left:1393.0px;top:83.6px;width:2px;height:2px;background:#222"></div><div class="r" style="left:1369.0px;top:83.6px;width:2px;height:2px;background:#222"></div><div class="r" style="left:1345.0px;top:83.6px;width:2px;height:2px;background:#222"></div><div class="r" style="left:1321.0px;top:83.6px;width:2px;height:2px;background:#222"></div><div class="r" style="left:1297.0px;top:83.6px;width:2px;height:2px;background:#222"></div><div class="r" style="left:1273.0px;top:83.6px;width:2px;height:2px;background:#222"></div><div class="r" style="left:1249.0px;top:83.6px;width:2px;height:2px;background:#222"></div><div class="t" style="left:1485.9px;top:72.1px;font-size:16.00px;font-weight:bold;">5</div><div class="r" style="left:1468.5px;top:89.1px;width:188.0px;height:1.3px;background:#1a1a1a"></div><div class="t" style="left:595.6px;top:96.1px;font-size:16.00px;font-weight:bold;">6</div><div class="t" style="left:634.0px;top:95.9px;font-size:16.15px;">Balance. Subtract line 5 from line 4</div><div class="r" style="left:1441.0px;top:107.6px;width:2px;height:2px;background:#222"></div><div class="r" style="left:1417.0px;top:107.6px;width:2px;height:2px;background:#222"></div><div class="r" style="left:1393.0px;top:107.6px;width:2px;height:2px;background:#222"></div><div class="r" style="left:1369.0px;top:107.6px;width:2px;height:2px;background:#222"></div><div class="r" style="left:1345.0px;top:107.6px;width:2px;height:2px;background:#222"></div><div class="r" style="left:1321.0px;top:107.6px;width:2px;height:2px;background:#222"></div><div class="r" style="left:1297.0px;top:107.6px;width:2px;height:2px;background:#222"></div><div class="r" style="left:1273.0px;top:107.6px;width:2px;height:2px;background:#222"></div><div class="r" style="left:1249.0px;top:107.6px;width:2px;height:2px;background:#222"></div><div class="r" style="left:1225.0px;top:107.6px;width:2px;height:2px;background:#222"></div><div class="r" style="left:1201.0px;top:107.6px;width:2px;height:2px;background:#222"></div><div class="r" style="left:1177.0px;top:107.6px;width:2px;height:2px;background:#222"></div><div class="r" style="left:1153.0px;top:107.6px;width:2px;height:2px;background:#222"></div><div class="r" style="left:1129.0px;top:107.6px;width:2px;height:2px;background:#222"></div><div class="r" style="left:1105.0px;top:107.6px;width:2px;height:2px;background:#222"></div><div class="r" style="left:1081.0px;top:107.6px;width:2px;height:2px;background:#222"></div><div class="r" style="left:1057.0px;top:107.6px;width:2px;height:2px;background:#222"></div><div class="r" style="left:1033.0px;top:107.6px;width:2px;height:2px;background:#222"></div><div class="r" style="left:1009.0px;top:107.6px;width:2px;height:2px;background:#222"></div><div class="r" style="left:985.0px;top:107.6px;width:2px;height:2px;background:#222"></div><div class="r" style="left:961.0px;top:107.6px;width:2px;height:2px;background:#222"></div><div class="r" style="left:937.0px;top:107.6px;width:2px;height:2px;background:#222"></div><div class="r" style="left:913.0px;top:107.6px;width:2px;height:2px;background:#222"></div><div class="t" style="left:1485.9px;top:96.1px;font-size:16.00px;font-weight:bold;">6</div><div class="r" style="left:1468.5px;top:113.3px;width:188.0px;height:1.0px;background:#555"></div><div class="t" style="left:595.6px;top:120.3px;font-size:16.00px;font-weight:bold;">7</div><div class="t" style="left:634.0px;top:120.1px;width:819.0px;font-size:16.15px;text-align:justify;text-align-last:justify;white-space:normal;">Applicable credit amount. If donor has DSUE amount from predeceased spouse(s) or Restored Exclusion Amount,</div><div class="t" style="left:634.0px;top:140.1px;font-size:16.15px;">enter amount from Schedule C, line 5; otherwise, see instructions</div><div class="r" style="left:1441.0px;top:151.8px;width:2px;height:2px;background:#222"></div><div class="r" style="left:1417.0px;top:151.8px;width:2px;height:2px;background:#222"></div><div class="r" style="left:1393.0px;top:151.8px;width:2px;height:2px;background:#222"></div><div class="r" style="left:1369.0px;top:151.8px;width:2px;height:2px;background:#222"></div><div class="r" style="left:1345.0px;top:151.8px;width:2px;height:2px;background:#222"></div><div class="r" style="left:1321.0px;top:151.8px;width:2px;height:2px;background:#222"></div><div class="r" style="left:1297.0px;top:151.8px;width:2px;height:2px;background:#222"></div><div class="r" style="left:1273.0px;top:151.8px;width:2px;height:2px;background:#222"></div><div class="r" style="left:1249.0px;top:151.8px;width:2px;height:2px;background:#222"></div><div class="r" style="left:1225.0px;top:151.8px;width:2px;height:2px;background:#222"></div><div class="r" style="left:1201.0px;top:151.8px;width:2px;height:2px;background:#222"></div><div class="r" style="left:1177.0px;top:151.8px;width:2px;height:2px;background:#222"></div><div class="r" style="left:1153.0px;top:151.8px;width:2px;height:2px;background:#222"></div><div class="r" style="left:1129.0px;top:151.8px;width:2px;height:2px;background:#222"></div><div class="t" style="left:1485.9px;top:144.1px;font-size:16.00px;font-weight:bold;">7</div><div class="r" style="left:1468.5px;top:161.3px;width:188.0px;height:1.0px;background:#555"></div><div class="t" style="left:595.6px;top:168.1px;font-size:16.00px;font-weight:bold;">8</div><div class="t" style="left:634.0px;top:167.9px;font-size:16.15px;">Enter the applicable credit against tax allowable for all prior periods from Schedule B, line 1, col. (c)</div><div class="r" style="left:1441.0px;top:179.6px;width:2px;height:2px;background:#222"></div><div class="r" style="left:1417.0px;top:179.6px;width:2px;height:2px;background:#222"></div><div class="r" style="left:1393.0px;top:179.6px;width:2px;height:2px;background:#222"></div><div class="r" style="left:1369.0px;top:179.6px;width:2px;height:2px;background:#222"></div><div class="t" style="left:1485.9px;top:168.1px;font-size:16.00px;font-weight:bold;">8</div><div class="r" style="left:1468.5px;top:185.2px;width:188.0px;height:1.3px;background:#1a1a1a"></div><div class="t" style="left:595.6px;top:192.1px;font-size:16.00px;font-weight:bold;">9</div><div class="t" style="left:634.0px;top:191.9px;font-size:16.15px;">Balance. Subtract line 8 from line 7. Do not enter less than zero</div><div class="r" style="left:1441.0px;top:203.6px;width:2px;height:2px;background:#222"></div><div class="r" style="left:1417.0px;top:203.6px;width:2px;height:2px;background:#222"></div><div class="r" style="left:1393.0px;top:203.6px;width:2px;height:2px;background:#222"></div><div class="r" style="left:1369.0px;top:203.6px;width:2px;height:2px;background:#222"></div><div class="r" style="left:1345.0px;top:203.6px;width:2px;height:2px;background:#222"></div><div class="r" style="left:1321.0px;top:203.6px;width:2px;height:2px;background:#222"></div><div class="r" style="left:1297.0px;top:203.6px;width:2px;height:2px;background:#222"></div><div class="r" style="left:1273.0px;top:203.6px;width:2px;height:2px;background:#222"></div><div class="r" style="left:1249.0px;top:203.6px;width:2px;height:2px;background:#222"></div><div class="r" style="left:1225.0px;top:203.6px;width:2px;height:2px;background:#222"></div><div class="r" style="left:1201.0px;top:203.6px;width:2px;height:2px;background:#222"></div><div class="r" style="left:1177.0px;top:203.6px;width:2px;height:2px;background:#222"></div><div class="r" style="left:1153.0px;top:203.6px;width:2px;height:2px;background:#222"></div><div class="r" style="left:1129.0px;top:203.6px;width:2px;height:2px;background:#222"></div><div class="r" style="left:1105.0px;top:203.6px;width:2px;height:2px;background:#222"></div><div class="t" style="left:1485.9px;top:192.1px;font-size:16.00px;font-weight:bold;">9</div><div class="r" style="left:1468.5px;top:209.3px;width:188.0px;height:1.0px;background:#555"></div><div class="t" style="left:586.7px;top:216.3px;font-size:16.00px;font-weight:bold;">10</div><div class="t" style="left:634.0px;top:216.1px;width:819.0px;font-size:16.15px;text-align:justify;text-align-last:justify;white-space:normal;">Enter 20% (0.20) of the amount allowed as a specific exemption for gifts made after September 8, 1976, and</div><div class="t" style="left:634.0px;top:236.1px;font-size:16.15px;">before January 1, 1977. See instructions</div><div class="r" style="left:1441.0px;top:247.8px;width:2px;height:2px;background:#222"></div><div class="r" style="left:1417.0px;top:247.8px;width:2px;height:2px;background:#222"></div><div class="r" style="left:1393.0px;top:247.8px;width:2px;height:2px;background:#222"></div><div class="r" style="left:1369.0px;top:247.8px;width:2px;height:2px;background:#222"></div><div class="r" style="left:1345.0px;top:247.8px;width:2px;height:2px;background:#222"></div><div class="r" style="left:1321.0px;top:247.8px;width:2px;height:2px;background:#222"></div><div class="r" style="left:1297.0px;top:247.8px;width:2px;height:2px;background:#222"></div><div class="r" style="left:1273.0px;top:247.8px;width:2px;height:2px;background:#222"></div><div class="r" style="left:1249.0px;top:247.8px;width:2px;height:2px;background:#222"></div><div class="r" style="left:1225.0px;top:247.8px;width:2px;height:2px;background:#222"></div><div class="r" style="left:1201.0px;top:247.8px;width:2px;height:2px;background:#222"></div><div class="r" style="left:1177.0px;top:247.8px;width:2px;height:2px;background:#222"></div><div class="r" style="left:1153.0px;top:247.8px;width:2px;height:2px;background:#222"></div><div class="r" style="left:1129.0px;top:247.8px;width:2px;height:2px;background:#222"></div><div class="r" style="left:1105.0px;top:247.8px;width:2px;height:2px;background:#222"></div><div class="r" style="left:1081.0px;top:247.8px;width:2px;height:2px;background:#222"></div><div class="r" style="left:1057.0px;top:247.8px;width:2px;height:2px;background:#222"></div><div class="r" style="left:1033.0px;top:247.8px;width:2px;height:2px;background:#222"></div><div class="r" style="left:1009.0px;top:247.8px;width:2px;height:2px;background:#222"></div><div class="r" style="left:985.0px;top:247.8px;width:2px;height:2px;background:#222"></div><div class="r" style="left:961.0px;top:247.8px;width:2px;height:2px;background:#222"></div><div class="r" style="left:937.0px;top:247.8px;width:2px;height:2px;background:#222"></div><div class="t" style="left:1481.4px;top:240.1px;font-size:16.00px;font-weight:bold;">10</div><div class="r" style="left:1468.5px;top:257.2px;width:188.0px;height:1.3px;background:#1a1a1a"></div><div class="t" style="left:587.6px;top:264.1px;font-size:16.00px;font-weight:bold;">11</div><div class="t" style="left:634.0px;top:263.9px;font-size:16.15px;">Balance. Subtract line 10 from line 9. Do not enter less than zero</div><div class="r" style="left:1441.0px;top:275.6px;width:2px;height:2px;background:#222"></div><div class="r" style="left:1417.0px;top:275.6px;width:2px;height:2px;background:#222"></div><div class="r" style="left:1393.0px;top:275.6px;width:2px;height:2px;background:#222"></div><div class="r" style="left:1369.0px;top:275.6px;width:2px;height:2px;background:#222"></div><div class="r" style="left:1345.0px;top:275.6px;width:2px;height:2px;background:#222"></div><div class="r" style="left:1321.0px;top:275.6px;width:2px;height:2px;background:#222"></div><div class="r" style="left:1297.0px;top:275.6px;width:2px;height:2px;background:#222"></div><div class="r" style="left:1273.0px;top:275.6px;width:2px;height:2px;background:#222"></div><div class="r" style="left:1249.0px;top:275.6px;width:2px;height:2px;background:#222"></div><div class="r" style="left:1225.0px;top:275.6px;width:2px;height:2px;background:#222"></div><div class="r" style="left:1201.0px;top:275.6px;width:2px;height:2px;background:#222"></div><div class="r" style="left:1177.0px;top:275.6px;width:2px;height:2px;background:#222"></div><div class="r" style="left:1153.0px;top:275.6px;width:2px;height:2px;background:#222"></div><div class="r" style="left:1129.0px;top:275.6px;width:2px;height:2px;background:#222"></div><div class="r" style="left:1105.0px;top:275.6px;width:2px;height:2px;background:#222"></div><div class="t" style="left:1481.8px;top:264.1px;font-size:16.00px;font-weight:bold;">11</div><div class="r" style="left:1468.5px;top:281.3px;width:188.0px;height:1.0px;background:#555"></div><div class="t" style="left:586.7px;top:288.1px;font-size:16.00px;font-weight:bold;">12</div><div class="t" style="left:634.0px;top:287.9px;font-size:16.15px;">Applicable credit. Enter the smaller of line 6 or line 11</div><div class="r" style="left:1441.0px;top:299.6px;width:2px;height:2px;background:#222"></div><div class="r" style="left:1417.0px;top:299.6px;width:2px;height:2px;background:#222"></div><div class="r" style="left:1393.0px;top:299.6px;width:2px;height:2px;background:#222"></div><div class="r" style="left:1369.0px;top:299.6px;width:2px;height:2px;background:#222"></div><div class="r" style="left:1345.0px;top:299.6px;width:2px;height:2px;background:#222"></div><div class="r" style="left:1321.0px;top:299.6px;width:2px;height:2px;background:#222"></div><div class="r" style="left:1297.0px;top:299.6px;width:2px;height:2px;background:#222"></div><div class="r" style="left:1273.0px;top:299.6px;width:2px;height:2px;background:#222"></div><div class="r" style="left:1249.0px;top:299.6px;width:2px;height:2px;background:#222"></div><div class="r" style="left:1225.0px;top:299.6px;width:2px;height:2px;background:#222"></div><div class="r" style="left:1201.0px;top:299.6px;width:2px;height:2px;background:#222"></div><div class="r" style="left:1177.0px;top:299.6px;width:2px;height:2px;background:#222"></div><div class="r" style="left:1153.0px;top:299.6px;width:2px;height:2px;background:#222"></div><div class="r" style="left:1129.0px;top:299.6px;width:2px;height:2px;background:#222"></div><div class="r" style="left:1105.0px;top:299.6px;width:2px;height:2px;background:#222"></div><div class="r" style="left:1081.0px;top:299.6px;width:2px;height:2px;background:#222"></div><div class="r" style="left:1057.0px;top:299.6px;width:2px;height:2px;background:#222"></div><div class="r" style="left:1033.0px;top:299.6px;width:2px;height:2px;background:#222"></div><div class="t" style="left:1481.4px;top:288.1px;font-size:16.00px;font-weight:bold;">12</div><div class="r" style="left:1468.5px;top:305.3px;width:188.0px;height:1.0px;background:#555"></div><div class="t" style="left:586.7px;top:312.1px;font-size:16.00px;font-weight:bold;">13</div><div class="t" style="left:634.0px;top:311.9px;font-size:16.15px;">Credit for foreign gift taxes. See instructions</div><div class="r" style="left:1441.0px;top:323.6px;width:2px;height:2px;background:#222"></div><div class="r" style="left:1417.0px;top:323.6px;width:2px;height:2px;background:#222"></div><div class="r" style="left:1393.0px;top:323.6px;width:2px;height:2px;background:#222"></div><div class="r" style="left:1369.0px;top:323.6px;width:2px;height:2px;background:#222"></div><div class="r" style="left:1345.0px;top:323.6px;width:2px;height:2px;background:#222"></div><div class="r" style="left:1321.0px;top:323.6px;width:2px;height:2px;background:#222"></div><div class="r" style="left:1297.0px;top:323.6px;width:2px;height:2px;background:#222"></div><div class="r" style="left:1273.0px;top:323.6px;width:2px;height:2px;background:#222"></div><div class="r" style="left:1249.0px;top:323.6px;width:2px;height:2px;background:#222"></div><div class="r" style="left:1225.0px;top:323.6px;width:2px;height:2px;background:#222"></div><div class="r" style="left:1201.0px;top:323.6px;width:2px;height:2px;background:#222"></div><div class="r" style="left:1177.0px;top:323.6px;width:2px;height:2px;background:#222"></div><div class="r" style="left:1153.0px;top:323.6px;width:2px;height:2px;background:#222"></div><div class="r" style="left:1129.0px;top:323.6px;width:2px;height:2px;background:#222"></div><div class="r" style="left:1105.0px;top:323.6px;width:2px;height:2px;background:#222"></div><div class="r" style="left:1081.0px;top:323.6px;width:2px;height:2px;background:#222"></div><div class="r" style="left:1057.0px;top:323.6px;width:2px;height:2px;background:#222"></div><div class="r" style="left:1033.0px;top:323.6px;width:2px;height:2px;background:#222"></div><div class="r" style="left:1009.0px;top:323.6px;width:2px;height:2px;background:#222"></div><div class="r" style="left:985.0px;top:323.6px;width:2px;height:2px;background:#222"></div><div class="r" style="left:961.0px;top:323.6px;width:2px;height:2px;background:#222"></div><div class="t" style="left:1481.4px;top:312.1px;font-size:16.00px;font-weight:bold;">13</div><div class="r" style="left:1468.5px;top:329.2px;width:188.0px;height:1.3px;background:#1a1a1a"></div><div class="t" style="left:586.7px;top:336.1px;font-size:16.00px;font-weight:bold;">14</div><div class="t" style="left:634.0px;top:335.9px;font-size:16.15px;">Total credits. Add lines 12 and 13</div><div class="r" style="left:1441.0px;top:347.6px;width:2px;height:2px;background:#222"></div><div class="r" style="left:1417.0px;top:347.6px;width:2px;height:2px;background:#222"></div><div class="r" style="left:1393.0px;top:347.6px;width:2px;height:2px;background:#222"></div><div class="r" style="left:1369.0px;top:347.6px;width:2px;height:2px;background:#222"></div><div class="r" style="left:1345.0px;top:347.6px;width:2px;height:2px;background:#222"></div><div class="r" style="left:1321.0px;top:347.6px;width:2px;height:2px;background:#222"></div><div class="r" style="left:1297.0px;top:347.6px;width:2px;height:2px;background:#222"></div><div class="r" style="left:1273.0px;top:347.6px;width:2px;height:2px;background:#222"></div><div class="r" style="left:1249.0px;top:347.6px;width:2px;height:2px;background:#222"></div><div class="r" style="left:1225.0px;top:347.6px;width:2px;height:2px;background:#222"></div><div class="r" style="left:1201.0px;top:347.6px;width:2px;height:2px;background:#222"></div><div class="r" style="left:1177.0px;top:347.6px;width:2px;height:2px;background:#222"></div><div class="r" style="left:1153.0px;top:347.6px;width:2px;height:2px;background:#222"></div><div class="r" style="left:1129.0px;top:347.6px;width:2px;height:2px;background:#222"></div><div class="r" style="left:1105.0px;top:347.6px;width:2px;height:2px;background:#222"></div><div class="r" style="left:1081.0px;top:347.6px;width:2px;height:2px;background:#222"></div><div class="r" style="left:1057.0px;top:347.6px;width:2px;height:2px;background:#222"></div><div class="r" style="left:1033.0px;top:347.6px;width:2px;height:2px;background:#222"></div><div class="r" style="left:1009.0px;top:347.6px;width:2px;height:2px;background:#222"></div><div class="r" style="left:985.0px;top:347.6px;width:2px;height:2px;background:#222"></div><div class="r" style="left:961.0px;top:347.6px;width:2px;height:2px;background:#222"></div><div class="r" style="left:937.0px;top:347.6px;width:2px;height:2px;background:#222"></div><div class="r" style="left:913.0px;top:347.6px;width:2px;height:2px;background:#222"></div><div class="r" style="left:889.0px;top:347.6px;width:2px;height:2px;background:#222"></div><div class="t" style="left:1481.4px;top:336.1px;font-size:16.00px;font-weight:bold;">14</div><div class="r" style="left:1468.5px;top:353.2px;width:188.0px;height:1.3px;background:#1a1a1a"></div><div class="t" style="left:586.7px;top:360.1px;font-size:16.00px;font-weight:bold;">15</div><div class="t" style="left:634.0px;top:359.9px;font-size:16.15px;">Balance. Subtract line 14 from line 6. Do not enter less than zero</div><div class="r" style="left:1441.0px;top:371.6px;width:2px;height:2px;background:#222"></div><div class="r" style="left:1417.0px;top:371.6px;width:2px;height:2px;background:#222"></div><div class="r" style="left:1393.0px;top:371.6px;width:2px;height:2px;background:#222"></div><div class="r" style="left:1369.0px;top:371.6px;width:2px;height:2px;background:#222"></div><div class="r" style="left:1345.0px;top:371.6px;width:2px;height:2px;background:#222"></div><div class="r" style="left:1321.0px;top:371.6px;width:2px;height:2px;background:#222"></div><div class="r" style="left:1297.0px;top:371.6px;width:2px;height:2px;background:#222"></div><div class="r" style="left:1273.0px;top:371.6px;width:2px;height:2px;background:#222"></div><div class="r" style="left:1249.0px;top:371.6px;width:2px;height:2px;background:#222"></div><div class="r" style="left:1225.0px;top:371.6px;width:2px;height:2px;background:#222"></div><div class="r" style="left:1201.0px;top:371.6px;width:2px;height:2px;background:#222"></div><div class="r" style="left:1177.0px;top:371.6px;width:2px;height:2px;background:#222"></div><div class="r" style="left:1153.0px;top:371.6px;width:2px;height:2px;background:#222"></div><div class="r" style="left:1129.0px;top:371.6px;width:2px;height:2px;background:#222"></div><div class="r" style="left:1105.0px;top:371.6px;width:2px;height:2px;background:#222"></div><div class="t" style="left:1481.4px;top:360.1px;font-size:16.00px;font-weight:bold;">15</div><div class="r" style="left:1468.5px;top:377.3px;width:188.0px;height:1.0px;background:#555"></div><div class="t" style="left:586.7px;top:384.1px;font-size:16.00px;font-weight:bold;">16</div><div class="t" style="left:634.0px;top:383.9px;font-size:16.15px;">Generation-skipping transfer taxes from Schedule D, Part 3, col. (g), total</div><div class="r" style="left:1441.0px;top:395.6px;width:2px;height:2px;background:#222"></div><div class="r" style="left:1417.0px;top:395.6px;width:2px;height:2px;background:#222"></div><div class="r" style="left:1393.0px;top:395.6px;width:2px;height:2px;background:#222"></div><div class="r" style="left:1369.0px;top:395.6px;width:2px;height:2px;background:#222"></div><div class="r" style="left:1345.0px;top:395.6px;width:2px;height:2px;background:#222"></div><div class="r" style="left:1321.0px;top:395.6px;width:2px;height:2px;background:#222"></div><div class="r" style="left:1297.0px;top:395.6px;width:2px;height:2px;background:#222"></div><div class="r" style="left:1273.0px;top:395.6px;width:2px;height:2px;background:#222"></div><div class="r" style="left:1249.0px;top:395.6px;width:2px;height:2px;background:#222"></div><div class="r" style="left:1225.0px;top:395.6px;width:2px;height:2px;background:#222"></div><div class="r" style="left:1201.0px;top:395.6px;width:2px;height:2px;background:#222"></div><div class="r" style="left:1177.0px;top:395.6px;width:2px;height:2px;background:#222"></div><div class="t" style="left:1481.4px;top:384.1px;font-size:16.00px;font-weight:bold;">16</div><div class="r" style="left:1468.5px;top:401.2px;width:188.0px;height:1.3px;background:#1a1a1a"></div><div class="t" style="left:586.7px;top:408.1px;font-size:16.00px;font-weight:bold;">17</div><div class="t" style="left:634.0px;top:407.9px;font-size:16.15px;"><b>Total tax.</b> Add lines 15 and 16</div><div class="r" style="left:1441.0px;top:419.6px;width:2px;height:2px;background:#222"></div><div class="r" style="left:1417.0px;top:419.6px;width:2px;height:2px;background:#222"></div><div class="r" style="left:1393.0px;top:419.6px;width:2px;height:2px;background:#222"></div><div class="r" style="left:1369.0px;top:419.6px;width:2px;height:2px;background:#222"></div><div class="r" style="left:1345.0px;top:419.6px;width:2px;height:2px;background:#222"></div><div class="r" style="left:1321.0px;top:419.6px;width:2px;height:2px;background:#222"></div><div class="r" style="left:1297.0px;top:419.6px;width:2px;height:2px;background:#222"></div><div class="r" style="left:1273.0px;top:419.6px;width:2px;height:2px;background:#222"></div><div class="r" style="left:1249.0px;top:419.6px;width:2px;height:2px;background:#222"></div><div class="r" style="left:1225.0px;top:419.6px;width:2px;height:2px;background:#222"></div><div class="r" style="left:1201.0px;top:419.6px;width:2px;height:2px;background:#222"></div><div class="r" style="left:1177.0px;top:419.6px;width:2px;height:2px;background:#222"></div><div class="r" style="left:1153.0px;top:419.6px;width:2px;height:2px;background:#222"></div><div class="r" style="left:1129.0px;top:419.6px;width:2px;height:2px;background:#222"></div><div class="r" style="left:1105.0px;top:419.6px;width:2px;height:2px;background:#222"></div><div class="r" style="left:1081.0px;top:419.6px;width:2px;height:2px;background:#222"></div><div class="r" style="left:1057.0px;top:419.6px;width:2px;height:2px;background:#222"></div><div class="r" style="left:1033.0px;top:419.6px;width:2px;height:2px;background:#222"></div><div class="r" style="left:1009.0px;top:419.6px;width:2px;height:2px;background:#222"></div><div class="r" style="left:985.0px;top:419.6px;width:2px;height:2px;background:#222"></div><div class="r" style="left:961.0px;top:419.6px;width:2px;height:2px;background:#222"></div><div class="r" style="left:937.0px;top:419.6px;width:2px;height:2px;background:#222"></div><div class="r" style="left:913.0px;top:419.6px;width:2px;height:2px;background:#222"></div><div class="r" style="left:889.0px;top:419.6px;width:2px;height:2px;background:#222"></div><div class="r" style="left:865.0px;top:419.6px;width:2px;height:2px;background:#222"></div><div class="t" style="left:1481.4px;top:408.1px;font-size:16.00px;font-weight:bold;">17</div><div class="r" style="left:1468.5px;top:425.3px;width:188.0px;height:1.0px;background:#555"></div><div class="t" style="left:586.7px;top:432.1px;font-size:16.00px;font-weight:bold;">18</div><div class="t" style="left:634.0px;top:431.9px;font-size:16.15px;">Gift and generation-skipping transfer taxes prepaid with extension of time to file</div><div class="r" style="left:1441.0px;top:443.6px;width:2px;height:2px;background:#222"></div><div class="r" style="left:1417.0px;top:443.6px;width:2px;height:2px;background:#222"></div><div class="r" style="left:1393.0px;top:443.6px;width:2px;height:2px;background:#222"></div><div class="r" style="left:1369.0px;top:443.6px;width:2px;height:2px;background:#222"></div><div class="r" style="left:1345.0px;top:443.6px;width:2px;height:2px;background:#222"></div><div class="r" style="left:1321.0px;top:443.6px;width:2px;height:2px;background:#222"></div><div class="r" style="left:1297.0px;top:443.6px;width:2px;height:2px;background:#222"></div><div class="r" style="left:1273.0px;top:443.6px;width:2px;height:2px;background:#222"></div><div class="r" style="left:1249.0px;top:443.6px;width:2px;height:2px;background:#222"></div><div class="r" style="left:1225.0px;top:443.6px;width:2px;height:2px;background:#222"></div><div class="t" style="left:1481.4px;top:432.1px;font-size:16.00px;font-weight:bold;">18</div><div class="r" style="left:1468.5px;top:449.3px;width:188.0px;height:1.0px;background:#555"></div><div class="t" style="left:586.7px;top:456.1px;font-size:16.00px;font-weight:bold;">19</div><div class="t" style="left:634.0px;top:455.9px;font-size:16.15px;">If line 18 is less than line 17, enter <b>balance due</b>. See instructions</div><div class="r" style="left:1441.0px;top:467.6px;width:2px;height:2px;background:#222"></div><div class="r" style="left:1417.0px;top:467.6px;width:2px;height:2px;background:#222"></div><div class="r" style="left:1393.0px;top:467.6px;width:2px;height:2px;background:#222"></div><div class="r" style="left:1369.0px;top:467.6px;width:2px;height:2px;background:#222"></div><div class="r" style="left:1345.0px;top:467.6px;width:2px;height:2px;background:#222"></div><div class="r" style="left:1321.0px;top:467.6px;width:2px;height:2px;background:#222"></div><div class="r" style="left:1297.0px;top:467.6px;width:2px;height:2px;background:#222"></div><div class="r" style="left:1273.0px;top:467.6px;width:2px;height:2px;background:#222"></div><div class="r" style="left:1249.0px;top:467.6px;width:2px;height:2px;background:#222"></div><div class="r" style="left:1225.0px;top:467.6px;width:2px;height:2px;background:#222"></div><div class="r" style="left:1201.0px;top:467.6px;width:2px;height:2px;background:#222"></div><div class="r" style="left:1177.0px;top:467.6px;width:2px;height:2px;background:#222"></div><div class="r" style="left:1153.0px;top:467.6px;width:2px;height:2px;background:#222"></div><div class="r" style="left:1129.0px;top:467.6px;width:2px;height:2px;background:#222"></div><div class="t" style="left:1481.4px;top:456.1px;font-size:16.00px;font-weight:bold;">19</div><div class="r" style="left:1468.5px;top:473.3px;width:188.0px;height:1.0px;background:#555"></div><div class="t" style="left:586.7px;top:480.1px;font-size:16.00px;font-weight:bold;">20</div><div class="t" style="left:634.0px;top:479.9px;font-size:16.15px;">If line 18 is greater than line 17, enter <b>amount to be refunded</b></div><div class="r" style="left:1441.0px;top:491.6px;width:2px;height:2px;background:#222"></div><div class="r" style="left:1417.0px;top:491.6px;width:2px;height:2px;background:#222"></div><div class="r" style="left:1393.0px;top:491.6px;width:2px;height:2px;background:#222"></div><div class="r" style="left:1369.0px;top:491.6px;width:2px;height:2px;background:#222"></div><div class="r" style="left:1345.0px;top:491.6px;width:2px;height:2px;background:#222"></div><div class="r" style="left:1321.0px;top:491.6px;width:2px;height:2px;background:#222"></div><div class="r" style="left:1297.0px;top:491.6px;width:2px;height:2px;background:#222"></div><div class="r" style="left:1273.0px;top:491.6px;width:2px;height:2px;background:#222"></div><div class="r" style="left:1249.0px;top:491.6px;width:2px;height:2px;background:#222"></div><div class="r" style="left:1225.0px;top:491.6px;width:2px;height:2px;background:#222"></div><div class="r" style="left:1201.0px;top:491.6px;width:2px;height:2px;background:#222"></div><div class="r" style="left:1177.0px;top:491.6px;width:2px;height:2px;background:#222"></div><div class="r" style="left:1153.0px;top:491.6px;width:2px;height:2px;background:#222"></div><div class="r" style="left:1129.0px;top:491.6px;width:2px;height:2px;background:#222"></div><div class="r" style="left:1105.0px;top:491.6px;width:2px;height:2px;background:#222"></div><div class="t" style="left:1481.4px;top:480.1px;font-size:16.00px;font-weight:bold;">20</div><div class="r" style="left:1467.8px;top:-30.2px;width:1.3px;height:528.2px;background:#222"></div><div class="r" style="left:1511.3px;top:-30.2px;width:1.3px;height:528.2px;background:#222"></div><div class="r" style="left:575.5px;top:497.1px;width:1081.0px;height:1.8px;background:#111"></div><div class="r" style="left:675.9px;top:498.0px;width:1.3px;height:216.0px;background:#222"></div><div class="t" style="left:580.3px;top:530.1px;font-size:23.00px;font-weight:bold;">Sign</div><div class="t" style="left:580.3px;top:559.2px;font-size:23.00px;font-weight:bold;">Here</div><div class="t" style="left:686.8px;top:502.4px;width:736.7px;font-size:14.00px;text-align:justify;text-align-last:justify;white-space:normal;">Under penalties of perjury, I declare that I have examined this return, including any accompanying schedules and</div><div class="t" style="left:686.8px;top:516.4px;width:736.7px;font-size:14.00px;text-align:justify;text-align-last:justify;white-space:normal;">statements, and to the best of my knowledge and belief, it is true, correct, and complete. Declaration of preparer</div><div class="t" style="left:686.8px;top:530.4px;font-size:14.00px;">(other than donor) is based on all information of which preparer has any knowledge.</div><div class="r" style="left:1237.6px;top:569.7px;width:1.3px;height:24.3px;background:#222"></div><div class="r" style="left:677.0px;top:593.4px;width:749.0px;height:1.3px;background:#555"></div><div class="t" style="left:685.3px;top:596.8px;font-size:14.00px;">Signature of donor</div><div class="t" style="left:1246.6px;top:596.2px;font-size:14.00px;">Date</div><div class="r" style="left:1438.5px;top:496.5px;width:219.0px;height:74.5px;border:3px solid #111;background:#fff;box-sizing:border-box;"></div><div class="t" style="left:1448.4px;top:507.9px;font-size:14.00px;">May the IRS discuss this return</div><div class="t" style="left:1448.4px;top:525.7px;font-size:14.00px;">with the preparer shown below?</div><div class="t" style="left:1448.4px;top:543.2px;font-size:14.00px;">See instructions.</div><div class="r" style="left:1560.8px;top:549.6px;width:15.0px;height:14.5px;border:1.3px solid #222;background:transparent;box-sizing:border-box;"></div><div class="t" style="left:1580.9px;top:551.1px;font-size:14.00px;font-weight:bold;">Yes</div><div class="r" style="left:1612.3px;top:549.6px;width:15.0px;height:14.5px;border:1.3px solid #222;background:transparent;box-sizing:border-box;"></div><div class="t" style="left:1632.4px;top:551.1px;font-size:14.00px;font-weight:bold;">No</div><div class="r" style="left:575.5px;top:617.1px;width:1081.0px;height:1.8px;background:#111"></div><div class="t" style="left:580.3px;top:629.0px;font-size:20.40px;font-weight:bold;">Paid</div><div class="t" style="left:580.3px;top:655.4px;font-size:20.40px;font-weight:bold;">Preparer</div><div class="t" style="left:580.3px;top:681.2px;font-size:20.40px;font-weight:bold;">Use Only</div><div class="r" style="left:992.4px;top:618.0px;width:1.3px;height:48.0px;background:#333"></div><div class="r" style="left:1295.3px;top:618.0px;width:1.3px;height:48.0px;background:#333"></div><div class="r" style="left:1424.8px;top:618.0px;width:1.3px;height:96.0px;background:#222"></div><div class="r" style="left:1539.8px;top:618.0px;width:1.3px;height:48.0px;background:#333"></div><div class="t" style="left:685.3px;top:621.6px;font-size:14.00px;">Preparer’s name</div><div class="t" style="left:999.6px;top:621.6px;font-size:14.00px;">Preparer’s signature</div><div class="t" style="left:1304.5px;top:621.6px;font-size:14.00px;">Date</div><div class="t" style="left:1438.0px;top:626.9px;font-size:14.00px;">Check</div><div class="r" style="left:1486.8px;top:623.3px;width:17.0px;height:16.2px;border:1.3px solid #222;background:transparent;box-sizing:border-box;"></div><div class="t" style="left:1513.0px;top:626.9px;font-size:14.00px;">if</div><div class="t" style="left:1438.0px;top:643.9px;font-size:14.00px;">self-employed</div><div class="t" style="left:1549.5px;top:622.1px;font-size:14.00px;">PTIN</div><div class="r" style="left:677.0px;top:665.4px;width:979.5px;height:1.3px;background:#555"></div><div class="t" style="left:683.2px;top:672.2px;font-size:14.00px;">Firm’s name</div><div class="t" style="left:1438.0px;top:672.6px;font-size:14.00px;">Firm’s EIN</div><div class="r" style="left:677.0px;top:689.4px;width:979.5px;height:1.3px;background:#555"></div><div class="t" style="left:683.2px;top:695.9px;font-size:14.00px;">Firm’s address</div><div class="t" style="left:1438.0px;top:696.9px;font-size:14.00px;">Phone no.</div><div class="r" style="left:575.5px;top:713.1px;width:1081.0px;height:1.8px;background:#111"></div><div class="t" style="left:576.5px;top:720.9px;font-size:15.70px;font-weight:bold;">For Disclosure, Privacy Act, and Paperwork Reduction Act Notice, see the instructions for this form.</div><div class="t" style="left:1379.7px;top:722.2px;font-size:14.00px;">Cat. No. 16783M</div><div class="t" style="left:1544.3px;top:720.2px;font-size:14.00px;">Form</div><div class="t" style="left:1580.9px;top:715.1px;font-size:19.60px;font-weight:bold;">709</div><div class="t" style="left:1617.5px;top:720.8px;font-size:13.30px;">(2024)</div></div></div><div class="r" style="left:92px;top:802.8px;width:1224px;height:1584px;background:#fff;box-shadow:0 0 6px rgba(0,0,0,0.08);overflow:hidden"><div class="r" style="left:-504px;top:-863.8px"><div class="t" style="left:577.9px;top:940.5px;font-size:13.40px;">Form 709 (2024)</div><div class="t" style="left:1610.1px;top:939.2px;font-size:13.40px;">Page </div><div class="t" style="left:1647.5px;top:935.8px;font-size:18.00px;font-weight:bold;">2</div><div class="r" style="left:575.5px;top:958.9px;width:1081.0px;height:2.2px;background:#111"></div><div class="r" style="left:575.5px;top:960px;width:72.5px;height:23.2px;background:#111"></div><div class="t" style="left:581.4px;top:963.6px;font-size:20.00px;font-weight:bold;color:#fff;">Part III</div><div class="t" style="left:676.4px;top:963.6px;font-size:20.00px;font-weight:bold;">Spouse’s Consent on Gifts to Third Parties</div><div class="r" style="left:575.5px;top:983.2px;width:1081.0px;height:1.5px;background:#666"></div><div class="t" style="left:596.7px;top:995.9px;font-size:14.00px;font-weight:bold;">1</div><div class="t" style="left:634.0px;top:995.9px;width:911.0px;font-size:14.00px;text-align:justify;text-align-last:justify;white-space:normal;">Gifts by spouses to third parties. Do you consent to have the gifts (including generation-skipping transfers) made by you and</div><div class="t" style="left:634.0px;top:1014.9px;width:911.0px;font-size:14.00px;text-align:justify;text-align-last:justify;white-space:normal;">by your spouse to third parties during the calendar year considered as made one-half by each of you? See instructions. (If the</div><div class="t" style="left:634.0px;top:1033.9px;font-size:14.00px;">answer is “Yes,” the following information must be furnished. <b>If the answer is “No,” skip lines 2–7.</b>)</div><div class="r" style="left:1565.0px;top:1053.4px;width:91.5px;height:1.2px;background:#333"></div><div class="t" style="left:596.7px;top:1059.9px;font-size:14.00px;font-weight:bold;">2</div><div class="t" style="left:634.0px;top:1059.9px;font-size:14.00px;">Name of consenting spouse</div><div class="r" style="left:817.6px;top:1073.2px;width:357.4px;height:1.5px;background:#333"></div><div class="r" style="left:1565px;top:1055px;width:91.5px;height:23.5px;background:#bbb"></div><div class="r" style="left:1565.0px;top:1077.9px;width:91.5px;height:1.2px;background:#333"></div><div class="t" style="left:596.7px;top:1084.4px;font-size:14.00px;font-weight:bold;">3</div><div class="t" style="left:634.0px;top:1084.4px;font-size:14.00px;">SSN of consenting spouse</div><div class="r" style="left:809.0px;top:1097.8px;width:366.0px;height:1.5px;background:#333"></div><div class="r" style="left:1565px;top:1079.5px;width:91.5px;height:23.5px;background:#bbb"></div><div class="r" style="left:1565.0px;top:1102.0px;width:91.5px;height:2.0px;background:#333"></div><div class="t" style="left:596.7px;top:1108.9px;font-size:14.00px;font-weight:bold;">4</div><div class="t" style="left:634.0px;top:1108.9px;font-size:14.00px;">Were you married to one another during the entire calendar year? See instructions</div><div class="r" style="left:1565.0px;top:1126.9px;width:91.5px;height:1.2px;background:#333"></div><div class="t" style="left:596.7px;top:1133.4px;font-size:14.00px;font-weight:bold;">5</div><div class="t" style="left:634.0px;top:1133.4px;font-size:14.00px;">If line 4 is “No,” check whether</div><div class="r" style="left:830.3px;top:1134.5px;width:13.0px;height:13.0px;border:2.5px solid #111;background:transparent;box-sizing:border-box;"></div><div class="t" style="left:848.3px;top:1133.4px;font-size:14.00px;">married</div><div class="r" style="left:909.8px;top:1134.5px;width:13.0px;height:13.0px;border:2.5px solid #111;background:transparent;box-sizing:border-box;"></div><div class="t" style="left:927.8px;top:1133.4px;font-size:14.00px;">divorced or</div><div class="r" style="left:1011.0px;top:1134.5px;width:13.0px;height:13.0px;border:2.5px solid #111;background:transparent;box-sizing:border-box;"></div><div class="t" style="left:1029.0px;top:1133.4px;font-size:14.00px;">widowed/deceased, and give date. See instructions</div><div class="r" style="left:1410.0px;top:1146.8px;width:135.0px;height:1.5px;background:#333"></div><div class="r" style="left:1565px;top:1128.5px;width:91.5px;height:23.5px;background:#bbb"></div><div class="r" style="left:1565.0px;top:1151.4px;width:91.5px;height:1.2px;background:#333"></div><div class="t" style="left:596.7px;top:1157.9px;font-size:14.00px;font-weight:bold;">6</div><div class="t" style="left:634.0px;top:1157.9px;font-size:14.00px;">Will a gift tax return for this year be filed by your spouse? If “Yes,” mail both returns in the same envelope</div><div class="r" style="left:1565.0px;top:1175.9px;width:91.5px;height:1.2px;background:#333"></div><div class="t" style="left:596.7px;top:1182.4px;font-size:14.00px;font-weight:bold;">7</div><div class="t" style="left:634.0px;top:1182.4px;width:911.0px;font-size:14.00px;text-align:justify;text-align-last:justify;white-space:normal;"><b>Consent of Spouse.</b> I consent to have the gifts (and generation-skipping transfers) made by me and by my spouse to third parties during the</div><div class="t" style="left:634.0px;top:1201.4px;font-size:14.00px;">calendar year considered as made one-half by each of us. We are both aware of the joint and several liability for tax created by the</div><div class="r" style="left:1564.0px;top:984.0px;width:2.0px;height:237.5px;background:#222"></div><div class="r" style="left:1609.8px;top:984.0px;width:2.5px;height:237.5px;background:#222"></div><div class="r" style="left:575.5px;top:1221.0px;width:1081.0px;height:3.0px;background:#111"></div><div class="t" style="left:1552.2px;top:1229.4px;font-size:14.00px;">Form 709 (2024)</div></div></div><div class="r" style="left:92px;top:928.8px;width:1224px;height:10px;background:#646464"></div></div><div class="r" style="left:1901.5px;top:187px;width:8px;height:49px;border-radius:4px;background:#666"></div><div class="r" style="left:418.4px;top:67.2px;width:176.2px;height:59.4px;border-radius:13px;background:#333333;box-shadow:0 2px 6px rgba(0,0,0,0.18);"></div><svg class="ic" style="left:430.0px;top:75.0px;width:40.0px;height:40.0px;stroke-width:1.5" viewBox="0 0 40 40" fill="none" stroke="#fff" stroke-width="1.6" stroke-linecap="round" stroke-linejoin="round"><path d="M7.6 19 H34.6 V30.5 Q34.6 35.2 30 35.2 H12.2 Q7.6 35.2 7.6 30.5 Z"/><rect x="15.6" y="22.6" width="10.8" height="3.6" rx="1.8"/><path d="M14 9.2 L16.3 12.6 L20.4 13.7 L18.4 17.6 H9.6 L7.6 13.7 L11.7 12.6 Z"/><path d="M24.6 17.8 L28.7 12.3 L33.8 18.6"/><circle cx="23.2" cy="9.2" r="2.7"/></svg><div class="t" style="left:475.8px;top:90.6px;font-size:17.30px;font-weight:bold;color:#fff;">Ferramentas</div><div class="r" style="left:642.3px;top:67.2px;width:1074.5px;height:59.4px;border-radius:13px;background:#333333;box-shadow:0 2px 6px rgba(0,0,0,0.18);"></div><svg class="ic" style="left:661.5px;top:84.7px;width:23.5px;height:26.5px;stroke-width:1.5" viewBox="0 0 23.5 26.5" fill="none" stroke="#fff" stroke-width="1.6" stroke-linecap="round" stroke-linejoin="round"><path d="M2 2.5 L22 12.8 L12.5 15.5 L7.5 24.5 Z"/></svg><svg class="ic" style="left:702.0px;top:94.4px;width:10.0px;height:6.0px;stroke-width:1.5" viewBox="0 0 10 6" fill="none" stroke="#fff" stroke-width="1.6" stroke-linecap="round" stroke-linejoin="round"><path d="M1 1 L5 5 L9 1"/></svg><div class="r" style="left:728.8px;top:88.4px;width:1.2px;height:17.7px;background:#555"></div><svg class="ic" style="left:751.0px;top:85.0px;width:32.0px;height:25.0px;stroke-width:1.5" viewBox="0 0 32 25" fill="none" stroke="#fff" stroke-width="1.6" stroke-linecap="round" stroke-linejoin="round"><path d="M14 4 H6.5 Q1 4 1 9.5 V15 Q1 20.5 6.5 20.5 H14 M22 4 H26 Q31 4 31 9.5 V15 Q31 20.5 26 20.5 H22 M13.5 0.8 H21.5 M17.5 0.8 V23.8 M13.5 23.8 H21.5"/></svg><svg class="ic" style="left:812.5px;top:83.6px;width:27.0px;height:27.0px;stroke-width:1.6" viewBox="0 0 27 27" fill="none" stroke="#fff" stroke-width="1.6" stroke-linecap="round" stroke-linejoin="round"><circle cx="13.5" cy="13.5" r="12.5"/><circle cx="13.5" cy="13.5" r="6" fill="#fff" stroke="none"/></svg><svg class="ic" style="left:872.5px;top:84.0px;width:25.5px;height:25.5px;stroke-width:1.5" viewBox="0 0 25.5 25.5" fill="none" stroke="#fff" stroke-width="1.6" stroke-linecap="round" stroke-linejoin="round"><rect x="0.9" y="0.9" width="23.6" height="23.6" rx="3.5"/><path d="M7 12.8 L10.8 16.5 L18 8.5"/></svg><svg class="ic" style="left:932.5px;top:83.5px;width:30.0px;height:29.0px;stroke-width:1.5" viewBox="0 0 30 29" fill="none" stroke="#fff" stroke-width="1.6" stroke-linecap="round" stroke-linejoin="round"><path d="M19.5 1 H24.5 Q29 1 29 6 Q29 11.5 24 11.5 H19.5 M19.5 11.5 V23 Q19.5 28 15 28 H6 Q1 28 1 23 V6 Q1 1 6 1 H19.5 V11.5 H1 M6.5 17.5 H14.5 M6.5 22 H14.5"/><path d="M22.5 8 L24.5 5.5 L26.5 8 Z" fill="#fff"/></svg><svg class="ic" style="left:991.3px;top:83.8px;width:30.0px;height:29.0px;stroke-width:1.5" viewBox="0 0 30 29" fill="none" stroke="#fff" stroke-width="1.6" stroke-linecap="round" stroke-linejoin="round"><rect x="1" y="1" width="28" height="27" rx="5"/><path d="M18.5 1 V28 M5 8 H14 M5 13.8 H14 M5 19.5 H14"/><path d="M21.8 10.5 L23.8 8 L25.8 10.5 Z M21.8 17.5 L23.8 20 L25.8 17.5 Z" fill="#fff" stroke-width="1"/></svg><svg class="ic" style="left:1051.0px;top:85.0px;width:32.0px;height:30.0px;stroke-width:1.5" viewBox="0 0 32 30" fill="none" stroke="#fff" stroke-width="1.6" stroke-linecap="round" stroke-linejoin="round"><path d="M18.5 23.5 H6 Q1 23.5 1 18.5 V6 Q1 1 6 1 H24 Q29 1 29 6 V17"/><text x="7.5" y="16.5" font-family="Liberation Sans" font-size="12" textLength="12" lengthAdjust="spacingAndGlyphs" fill="#fff" stroke="#fff" stroke-width="0.3">OK</text><path d="M20 16 L30.5 21.5 L25.5 23 L23 28 Z" fill="#2e2e2e"/></svg><svg class="ic" style="left:1112.5px;top:83.8px;width:27.0px;height:27.0px;stroke-width:1.5" viewBox="0 0 27 27" fill="none" stroke="#fff" stroke-width="1.6" stroke-linecap="round" stroke-linejoin="round"><rect x="1" y="1" width="25" height="25" rx="5"/><circle cx="8" cy="8" r="1.3" fill="#fff"/><path d="M5.5 26 Q7 18.5 14 18.5 M10 26 Q11.5 17 19 15 Q22.5 14 26 14.5"/></svg><div class="r" style="left:1159px;top:71px;width:56px;height:49.75px;border-radius:11px;background:#a24ab6"></div><div class="r" style="left:1164px;top:75.8px;width:46px;height:40.2px;border-radius:7px;background:#7678f8"></div><svg class="ic" style="left:1172.5px;top:83.5px;width:27.5px;height:27.5px;stroke-width:1.4" viewBox="0 0 27.5 27.5" fill="none" stroke="#fff" stroke-width="1.6" stroke-linecap="round" stroke-linejoin="round"><rect x="1" y="4.5" width="25.5" height="22" rx="5"/><path d="M1 10.5 H26.5 M7 1 V6.5 M20.5 1 V6.5"/><g fill="#fff" stroke="none"><rect x="5.5" y="14" width="3" height="3"/><rect x="12.2" y="14" width="3" height="3"/><rect x="19" y="14" width="3" height="3"/><rect x="5.5" y="19.5" width="3" height="3"/><rect x="12.2" y="19.5" width="3" height="3"/><rect x="19" y="19.5" width="3" height="3"/></g></svg><svg class="ic" style="left:1222.0px;top:76.0px;width:50.0px;height:40.0px;stroke-width:1.5" viewBox="0 0 50 40" fill="none" stroke="#fff" stroke-width="1.6" stroke-linecap="round" stroke-linejoin="round"><path d="M6 18.1 L12 23.9 M12 18.1 L6 23.9 M6.2 27.8 H43.5"/><path d="M15.5 23 C19 23 26 20 29.5 16 C32.5 12.5 31.5 5.5 27 5.5 C22 5.5 18.5 16 17.8 24 C17.3 30 17.2 35.5 19.5 35.5 C22 35.5 27 26 31.8 19.2 C32.5 21 32.8 24 34 24 C35.5 24 36 22 37.5 22.5 C38.5 24 39 23.5 43.3 20.7"/></svg><svg class="ic" style="left:1295.6px;top:82.0px;width:26.0px;height:30.0px;stroke-width:1.5" viewBox="0 0 26 30" fill="none" stroke="#fff" stroke-width="1.6" stroke-linecap="round" stroke-linejoin="round"><path d="M7 23.5 H5 Q1 23.5 1 19.5 V5 Q1 1 5 1 H13.5 Q17.5 1 18 5"/><rect x="7" y="6.5" width="17.5" height="22.5" rx="4.5"/><path d="M11.5 13 H20 M11.5 17.5 H20 M11.5 22 H20"/></svg><svg class="ic" style="left:1361.5px;top:85.0px;width:31.0px;height:25.0px;stroke-width:1.5" viewBox="0 0 31 25" fill="none" stroke="#fff" stroke-width="1.6" stroke-linecap="round" stroke-linejoin="round"><rect x="1" y="1" width="12" height="9.5" rx="3.5"/><rect x="17.5" y="1" width="12" height="9.5" rx="3.5"/><rect x="1" y="14" width="12" height="9.5" rx="3.5"/><rect x="17.5" y="14" width="12" height="9.5" rx="3.5"/></svg><div class="r" style="left:1430.0px;top:93.6px;width:5px;height:5px;border-radius:50%;background:#fff"></div><div class="r" style="left:1439.0px;top:93.6px;width:5px;height:5px;border-radius:50%;background:#fff"></div><div class="r" style="left:1448.0px;top:93.6px;width:5px;height:5px;border-radius:50%;background:#fff"></div><div class="t" style="left:1465.6px;top:91.1px;font-size:16.70px;font-weight:bold;color:#fff;">Mais</div><div class="r" style="left:1520.7px;top:88.3px;width:1.2px;height:17.5px;background:#555"></div><div class="r" style="left:1548.6px;top:84.9px;width:2.0px;height:22.9px;background:#fff"></div><div class="r" style="left:1553.4px;top:90.9px;width:13.6px;height:3.0px;background:#9a9a9a"></div><div class="r" style="left:1553.4px;top:99.9px;width:9.4px;height:3.0px;background:#9a9a9a"></div><svg class="ic" style="left:1584.5px;top:94.5px;width:10.0px;height:6.0px;stroke-width:1.5" viewBox="0 0 10 6" fill="none" stroke="#fff" stroke-width="1.6" stroke-linecap="round" stroke-linejoin="round"><path d="M1 1 L5 5 L9 1"/></svg><div class="r" style="left:1621.3px;top:88.0px;width:1.2px;height:17.8px;background:#555"></div><div class="r" style="left:1635.2px;top:72.9px;width:76px;height:48px;border-radius:9px;background:#3e3e3e"></div><div class="t" style="left:1646.7px;top:90.6px;font-size:16.70px;color:#f4f4f4;">Fechar</div><div class="r" style="left:1765.1px;top:66.9px;width:142.1px;height:59.9px;border-radius:13px;background:#333333;box-shadow:0 2px 6px rgba(0,0,0,0.18);"></div><svg class="ic" style="left:1788.0px;top:83.0px;width:24.0px;height:27.5px;stroke-width:1.5" viewBox="0 0 24 27.5" fill="none" stroke="#fff" stroke-width="1.6" stroke-linecap="round" stroke-linejoin="round"><path d="M6 1 H17.5 Q23 1 23 6.5 V22.5 Q23 26.5 19 26.5 H5 Q1 26.5 1 22.5 V6 Q1 1 6 1 Z M6.5 1.2 V4 Q6.5 6.8 9.5 6.8 H14.5 Q17.5 6.8 17.5 4 V1.2"/><circle cx="12" cy="17.5" r="3.8"/></svg><svg class="ic" style="left:1829.7px;top:94.3px;width:10.0px;height:6.0px;stroke-width:1.5" viewBox="0 0 10 6" fill="none" stroke="#fff" stroke-width="1.6" stroke-linecap="round" stroke-linejoin="round"><path d="M1 1 L5 5 L9 1"/></svg><div class="r" style="left:1857.2px;top:79.4px;width:34px;height:34px;border-radius:50%;background:radial-gradient(circle at 45% 80%,#27a6ef 0%,#3b8df0 45%,#5a6ff2 100%);box-shadow:0 0 3px rgba(80,120,240,0.6)"></div><svg class="ic" style="left:1858px;top:80px;width:33px;height:33px" viewBox="0 0 33 33" fill="none" stroke="#fff" stroke-width="1.3"><ellipse cx="16.2" cy="16.4" rx="11" ry="7" transform="rotate(-40 16.2 16.4)" stroke-dasharray="22 4 14 3"/><ellipse cx="16.2" cy="16.4" rx="11" ry="7" transform="rotate(50 16.2 16.4)" stroke-dasharray="22 4 14 3"/><path d="M16.2 13.2 L17 15.6 L19.4 16.4 L17 17.2 L16.2 19.6 L15.4 17.2 L13 16.4 L15.4 15.6 Z" fill="#fff" stroke="none"/></svg><div class="r" style="left:418.5px;top:935.8px;width:179px;height:58px;border-radius:12px;background:#333333;box-shadow:0 2px 6px rgba(0,0,0,0.18);"></div><svg class="ic" style="left:443.5px;top:958.5px;width:9.0px;height:16.0px;stroke-width:1.5" viewBox="0 0 9 16" fill="none" stroke="#fff" stroke-width="1.6" stroke-linecap="round" stroke-linejoin="round"><path d="M8 1 L1 8 L8 15"/></svg><div class="r" style="left:500.9px;top:964.2px;width:3.2px;height:3.2px;border-radius:50%;background:#fff"></div><div class="r" style="left:506.4px;top:964.2px;width:3.2px;height:3.2px;border-radius:50%;background:#fff"></div><div class="r" style="left:511.9px;top:964.2px;width:3.2px;height:3.2px;border-radius:50%;background:#fff"></div><svg class="ic" style="left:564.0px;top:958.5px;width:9.0px;height:16.0px;stroke:#7a7a7a;stroke-width:1.5" viewBox="0 0 9 16" fill="none" stroke="#fff" stroke-width="1.6" stroke-linecap="round" stroke-linejoin="round"><path d="M1 1 L8 8 L1 15"/></svg><div class="r" style="left:1248px;top:936px;width:659.3px;height:58px;border-radius:12px;background:#333333;box-shadow:0 2px 6px rgba(0,0,0,0.18);"></div><div class="r" style="left:1260px;top:954.3px;width:23px;height:23px;border-radius:50%;background:#4b4b4b"></div><svg class="ic" style="left:1269.5px;top:961.0px;width:7.0px;height:10.0px;stroke-width:1.5" viewBox="0 0 7 10" fill="none" stroke="#fff" stroke-width="1.6" stroke-linecap="round" stroke-linejoin="round"><path d="M1 1 L5 5 L1 9"/></svg><svg class="ic" style="left:1305.0px;top:954.3px;width:29.0px;height:24.5px;stroke-width:1.5" viewBox="0 0 29 24.5" fill="none" stroke="#fff" stroke-width="1.6" stroke-linecap="round" stroke-linejoin="round"><rect x="1" y="1" width="27" height="22.5" rx="4"/><path d="M14.5 1 V23.5 M5 6.5 H11 M5 10.5 H11 M5 14.5 H8.5 M18 6.5 H24 M18 10.5 H24 M18 14.5 H21"/></svg><svg class="ic" style="left:1365.0px;top:954.0px;width:30.5px;height:26.5px;stroke-width:1.5" viewBox="0 0 30.5 26.5" fill="none" stroke="#fff" stroke-width="1.6" stroke-linecap="round" stroke-linejoin="round"><path d="M9 20 H6 Q1 20 1 15 V6 Q1 1 6 1 H24.5 Q29.5 1 29.5 6 V15 Q29.5 20 24.5 20 H21.5"/><path d="M15.2 19 L19.5 25.2 H11 Z"/></svg><div class="r" style="left:1416.0px;top:957.0px;width:1.2px;height:17.6px;background:#555"></div><div class="r" style="left:1429.6px;top:945.4px;width:37.7px;height:39.8px;border-radius:10px;background:#242424"></div><div class="t" style="left:1443.8px;top:957.6px;font-size:17.00px;color:#f2f2f2;">1</div><div class="t" style="left:1474.0px;top:957.6px;font-size:17.00px;color:#777;">/ 10</div><svg class="ic" style="left:1532.0px;top:959.5px;width:16.0px;height:9.0px;stroke:#777;stroke-width:1.5" viewBox="0 0 16 9" fill="none" stroke="#fff" stroke-width="1.6" stroke-linecap="round" stroke-linejoin="round"><path d="M1 8 L8 1 L15 8"/></svg><svg class="ic" style="left:1591.8px;top:962.3px;width:16.0px;height:9.0px;stroke-width:1.5" viewBox="0 0 16 9" fill="none" stroke="#fff" stroke-width="1.6" stroke-linecap="round" stroke-linejoin="round"><path d="M1 1 L8 8 L15 1"/></svg><div class="r" style="left:1636.4px;top:957.0px;width:1.2px;height:17.0px;background:#555"></div><div class="r" style="left:1650.6px;top:945.4px;width:69.4px;height:39.6px;border-radius:10px;background:#242424"></div><div class="t" style="left:1665.8px;top:959.0px;font-size:15.60px;color:#f2f2f2;">100%</div><div class="r" style="left:1749.0px;top:964.2px;width:16.8px;height:1.6px;background:#fff"></div><svg class="ic" style="left:1809.0px;top:957.2px;width:17.0px;height:17.0px;stroke-width:1.6" viewBox="0 0 17 17" fill="none" stroke="#fff" stroke-width="1.6" stroke-linecap="round" stroke-linejoin="round"><path d="M8.5 0.8 V16.3 M0.8 8.5 H16.3"/></svg><svg class="ic" style="left:1864.6px;top:954.6px;width:26.5px;height:23.5px;stroke-width:1.5" viewBox="0 0 26.5 23.5" fill="none" stroke="#fff" stroke-width="1.6" stroke-linecap="round" stroke-linejoin="round"><rect x="0.9" y="0.9" width="24.6" height="21.6" rx="4"/><text x="13.2" y="16" text-anchor="middle" font-family="Liberation Sans" font-size="11" font-weight="bold" fill="#fff" stroke="none">1:1</text></svg><svg class="ic" style="left:0;top:0;width:1919px;height:995px" viewBox="0 0 1919 995"><path d="M1206.5 128 L1357.6 605.5 M1335.6 587.7 L1357.6 605.5 L1366 578.7" fill="none" stroke="#a64cb8" stroke-width="4.5" stroke-linecap="round" stroke-linejoin="round"/></svg><div class="r" style="left:1330.0px;top:612.8px;width:101.0px;height:2.2px;background:#8a8ef3"></div><div class="r" style="left:1330.0px;top:667.8px;width:101.0px;height:2.2px;background:#8a8ef3"></div><div class="r" style="left:1323.1px;top:619.0px;width:2.0px;height:44.0px;background:#8a8ef3"></div><div class="r" style="left:1435.9px;top:619.0px;width:2.0px;height:44.0px;background:#8a8ef3"></div><div class="r" style="left:1333.2px;top:623.3px;width:95.2px;height:37px;border:2.2px solid #111;background:#dde0f7;box-sizing:border-box"></div><div class="r" style="left:1338.8px;top:624.5px;width:84.2px;height:35px;border-radius:6px;background:#a66cf4"></div><div class="t" style="left:1344.6px;top:634.6px;font-size:16.40px;color:#f5e8ff;">DateBox1</div><div class="r" style="left:1318.8px;top:608.5px;width:10.5px;height:10.5px;border-radius:50%;background:#7478f4"></div><div class="r" style="left:1431.7px;top:608.5px;width:10.5px;height:10.5px;border-radius:50%;background:#7478f4"></div><div class="r" style="left:1318.8px;top:663.2px;width:10.5px;height:10.5px;border-radius:50%;background:#7478f4"></div><div class="r" style="left:1431.7px;top:663.2px;width:10.5px;height:10.5px;border-radius:50%;background:#7478f4"></div></body></html>
